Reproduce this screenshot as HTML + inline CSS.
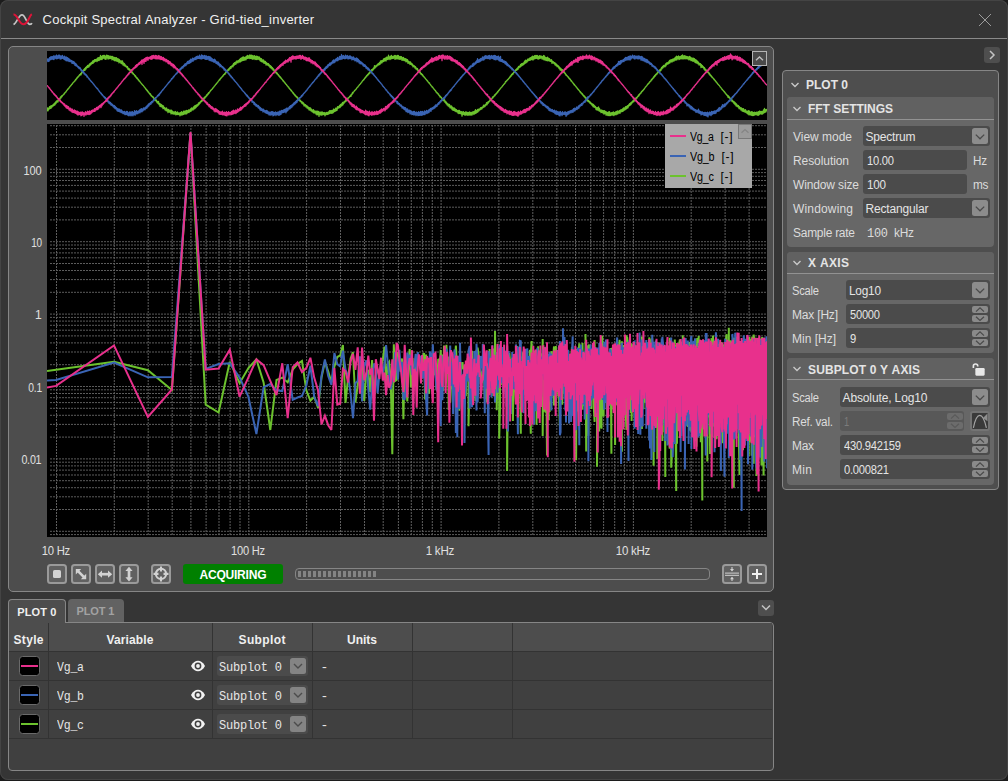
<!DOCTYPE html>
<html><head><meta charset="utf-8"><title>Cockpit Spectral Analyzer</title><style>
html,body{margin:0;padding:0;background:#1c1c1c;}
body{width:1008px;height:781px;position:relative;overflow:hidden;font-family:"Liberation Sans",sans-serif;}
.b{position:absolute;}
.t{position:absolute;white-space:nowrap;line-height:1.15;font-family:"Liberation Sans",sans-serif;}
.m{font-family:"Liberation Mono",monospace;}
svg{overflow:visible;}
</style></head><body>
<div class="b" style="left:0px;top:0px;width:1007.5px;height:779.5px;background:#353535;border-radius:8px;box-shadow:inset 0 0 0 1px #444;"></div>
<svg class="b" style="left:12px;top:12px;" width="22" height="16" viewBox="0 0 22 16"><path d="M1.5 12.6 C5 11 6.5 2.8 10 2.8 C13.5 2.8 14.5 12.3 18 12.3 C19.2 12.3 19.6 12 19.8 11" stroke="#c4c4c4" stroke-width="1.7" fill="none"/><path d="M1.5 2.6 C5.5 2.2 7 12.2 11.5 12.2 C16 12.2 17 4 19.8 2.2" stroke="#dc1438" stroke-width="2" fill="none"/></svg>
<span class="t" style="top:12.72px;font-size:13px;color:#f0f0f0;letter-spacing:0.237px;left:42.6px;">Cockpit&nbsp;Spectral&nbsp;Analyzer&nbsp;-&nbsp;Grid-tied_inverter</span>
<svg class="b" style="left:978px;top:13px;" width="14" height="14" viewBox="0 0 14 14"><path d="M1 1L13 13M13 1L1 13" stroke="#9c9c9c" stroke-width="1" fill="none"/></svg>
<div class="b" style="left:1px;top:38px;width:1006px;height:1px;background:#8a8a8a;"></div>
<div class="b" style="left:8px;top:46px;width:766px;height:546px;background:#4d4d4d;border:1px solid #868686;border-radius:5px;box-sizing:border-box;"></div>
<div class="b" style="left:47px;top:51px;width:720px;height:69px;background:#000;"></div>
<div class="b" style="left:47px;top:124px;width:720px;height:413px;background:#000;"></div>
<svg class="b" style="left:0px;top:0px;" width="1008" height="781" viewBox="0 0 1008 781"><defs><clipPath id="c1"><rect x="47" y="51" width="720" height="69"/></clipPath><clipPath id="c2"><rect x="47" y="124" width="720" height="413"/></clipPath></defs><g clip-path="url(#c1)"><path d="M47,111.3 47.5,107.9 48,110.8 48.5,108.1 49,109.5 49.5,106.6 50,108.4 50.5,106.0 51,108.5 51.5,105.6 52,107.1 52.5,105.1 53,106.2 53.5,104.1 54,105.5 54.5,103.1 55,104.9 55.5,102.0 56,103.6 56.5,100.9 57,102.2 57.5,100.6 58,102.0 58.5,99.7 59,99.9 59.5,98.3 60,99.1 60.5,97.0 61,98.0 61.5,95.8 62,96.8 62.5,95.3 63,95.3 63.5,94.2 64,94.5 64.5,93.0 65,93.1 65.5,91.9 66,92.0 66.5,90.7 67,90.6 67.5,89.2 68,89.4 68.5,88.1 69,88.2 69.5,86.9 70,86.8 70.5,85.7 71,85.7 71.5,84.4 72,84.4 72.5,83.2 73,83.1 73.5,82.0 74,82.0 74.5,80.9 75,81.0 75.5,79.5 76,79.9 76.5,78.2 77,78.6 77.5,77.0 78,77.4 78.5,76.0 79,76.2 79.5,74.7 80,75.1 80.5,73.7 81,74.9 81.5,72.4 82,73.1 82.5,71.2 83,72.2 83.5,69.9 84,70.7 84.5,68.6 85,70.3 85.5,67.5 86,69.1 86.5,66.7 87,67.8 87.5,65.4 88,67.3 88.5,65.2 89,66.8 89.5,63.8 90,65.6 90.5,63.2 91,64.7 91.5,62.5 92,63.6 92.5,61.0 93,63.4 93.5,60.6 94,62.5 94.5,59.7 95,61.5 95.5,59.5 96,61.0 96.5,59.2 97,61.7 97.5,58.0 98,60.5 98.5,57.6 99,60.7 99.5,57.4 100,59.9 100.5,55.4 101,59.3 101.5,56.5 102,59.6 102.5,55.6 103,58.5 103.5,55.3 104,58.1 104.5,55.4 105,59.1 105.5,56.2 106,59.4 106.5,55.2 107,57.9 107.5,55.4 108,59.0 108.5,55.7 109,59.0 109.5,56.2 110,58.4 110.5,56.2 111,58.5 111.5,56.4 112,59.9 112.5,56.4 113,59.3 113.5,57.1 114,60.4 114.5,57.3 115,60.8 115.5,57.6 116,60.6 116.5,57.6 117,61.4 117.5,58.6 118,61.5 118.5,58.8 119,62.8 119.5,59.5 120,62.2 120.5,60.8 121,63.4 121.5,60.9 122,63.8 122.5,60.9 123,65.0 123.5,62.8 124,65.7 124.5,63.5 125,66.2 125.5,65.0 126,66.9 126.5,66.2 127,67.8 127.5,66.5 128,69.3 128.5,68.2 129,70.0 129.5,68.9 130,71.0 130.5,69.9 131,71.8 131.5,70.8 132,73.0 132.5,72.2 133,74.1 133.5,73.6 134,74.9 134.5,74.7 135,76.4 135.5,75.7 136,77.5 136.5,77.2 137,78.7 137.5,78.1 138,79.8 138.5,79.5 139,81.0 139.5,80.9 140,81.9 140.5,82.2 141,83.2 141.5,83.3 142,84.5 142.5,84.5 143,85.5 143.5,85.7 144,86.8 144.5,86.9 145,88.0 145.5,88.0 146,89.6 146.5,89.3 147,90.8 147.5,90.5 148,92.0 148.5,91.8 149,93.2 149.5,93.1 150,94.5 150.5,93.8 151,95.8 151.5,95.4 152,96.7 152.5,96.3 153,97.7 153.5,97.2 154,99.3 154.5,98.5 155,100.5 155.5,99.1 156,101.1 156.5,100.1 157,102.7 157.5,101.6 158,103.5 158.5,101.4 159,104.6 159.5,103.5 160,106.4 160.5,103.9 161,106.7 161.5,104.5 162,107.1 162.5,105.4 163,108.6 163.5,105.9 164,108.6 164.5,107.6 165,109.9 165.5,108.1 166,110.6 166.5,107.8 167,111.0 167.5,109.3 168,112.6 168.5,109.3 169,111.8 169.5,110.1 170,112.4 170.5,110.2 171,113.8 171.5,110.1 172,113.6 172.5,111.1 173,113.8 173.5,111.8 174,114.2 174.5,111.8 175,114.1 175.5,111.5 176,115.0 176.5,112.4 177,114.4 177.5,111.8 178,114.6 178.5,112.8 179,114.6 179.5,112.8 180,115.8 180.5,112.5 181,114.8 181.5,111.6 182,115.1 182.5,112.4 183,114.6 183.5,111.1 184,114.3 184.5,111.2 185,113.6 185.5,110.8 186,114.2 186.5,110.4 187,113.6 187.5,110.6 188,112.3 188.5,109.9 189,112.7 189.5,109.9 190,111.5 190.5,108.9 191,111.5 191.5,107.9 192,110.0 192.5,108.1 193,110.1 193.5,106.9 194,109.2 194.5,105.8 195,108.6 195.5,105.3 196,107.6 196.5,104.9 197,106.5 197.5,104.3 198,105.7 198.5,102.9 199,104.7 199.5,102.3 200,103.4 200.5,101.4 201,102.1 201.5,100.1 202,101.4 202.5,99.4 203,100.3 203.5,98.2 204,99.4 204.5,97.1 205,98.2 205.5,96.3 206,96.8 206.5,95.0 207,95.8 207.5,94.0 208,94.5 208.5,92.7 209,93.3 209.5,91.9 210,91.8 210.5,90.4 211,90.5 211.5,89.5 212,89.4 212.5,88.2 213,88.2 213.5,87.1 214,87.0 214.5,85.8 215,85.7 215.5,84.6 216,84.4 216.5,83.4 217,83.2 217.5,82.1 218,82.1 218.5,80.8 219,80.7 219.5,79.3 220,79.8 220.5,78.1 221,78.4 221.5,77.1 222,77.2 222.5,76.0 223,76.2 223.5,74.6 224,74.9 224.5,73.6 225,74.3 225.5,72.3 226,72.8 226.5,71.0 227,71.8 227.5,70.0 228,70.8 228.5,68.9 229,70.1 229.5,67.8 230,68.9 230.5,66.6 231,68.4 231.5,66.1 232,66.9 232.5,65.2 233,66.9 233.5,63.5 234,65.3 234.5,62.6 235,64.5 235.5,62.2 236,64.1 236.5,61.0 237,62.9 237.5,60.9 238,62.9 238.5,60.5 239,61.8 239.5,59.4 240,62.1 240.5,58.4 241,61.5 241.5,57.8 242,60.9 242.5,57.2 243,60.4 243.5,56.9 244,60.3 244.5,57.3 245,59.9 245.5,57.0 246,59.8 246.5,56.1 247,58.7 247.5,55.3 248,58.3 248.5,55.8 249,58.1 249.5,55.0 250,58.7 250.5,55.2 251,58.3 251.5,55.2 252,58.9 252.5,55.5 253,59.4 253.5,55.9 254,58.7 254.5,55.7 255,59.5 255.5,56.4 256,59.5 256.5,56.2 257,59.6 257.5,56.4 258,59.2 258.5,56.9 259,59.5 259.5,57.0 260,60.6 260.5,58.3 261,61.4 261.5,58.7 262,61.9 262.5,59.8 263,62.2 263.5,59.9 264,63.3 264.5,61.2 265,63.3 265.5,61.3 266,65.0 266.5,62.7 267,64.9 267.5,63.4 268,65.3 268.5,63.6 269,66.1 269.5,64.9 270,67.5 270.5,65.6 271,68.2 271.5,66.5 272,69.0 272.5,67.7 273,70.2 273.5,68.8 274,71.0 274.5,70.1 275,72.0 275.5,71.2 276,73.1 276.5,72.3 277,74.0 277.5,73.3 278,75.1 278.5,74.7 279,76.4 279.5,75.9 280,77.5 280.5,76.9 281,78.5 281.5,78.2 282,79.5 282.5,79.5 283,81.0 283.5,80.7 284,82.1 284.5,82.0 285,83.3 285.5,83.2 286,84.4 286.5,84.6 287,85.6 287.5,85.8 288,86.9 288.5,86.8 289,88.3 289.5,88.2 290,89.4 290.5,89.3 291,90.8 291.5,90.4 292,91.9 292.5,91.8 293,93.3 293.5,92.9 294,94.5 294.5,94.2 295,95.8 295.5,95.2 296,96.8 296.5,96.4 297,97.9 297.5,97.1 298,99.3 298.5,98.4 299,100.4 299.5,99.4 300,101.3 300.5,100.3 301,102.2 301.5,101.5 302,103.6 302.5,102.0 303,104.1 303.5,102.9 304,105.8 304.5,104.1 305,106.0 305.5,104.6 306,107.0 306.5,105.5 307,108.0 307.5,106.2 308,108.7 308.5,107.1 309,109.8 309.5,107.6 310,110.1 310.5,107.8 311,110.9 311.5,109.2 312,111.5 312.5,110.0 313,112.3 313.5,109.6 314,113.2 314.5,110.8 315,112.9 315.5,111.1 316,114.2 316.5,111.2 317,114.8 317.5,111.2 318,114.6 318.5,111.3 319,116.4 319.5,112.1 320,114.6 320.5,112.1 321,115.1 321.5,112.0 322,115.1 322.5,112.0 323,114.6 323.5,112.7 324,114.7 324.5,112.5 325,115.8 325.5,112.8 326,114.5 326.5,112.4 327,114.7 327.5,112.4 328,114.4 328.5,111.9 329,113.8 329.5,110.7 330,113.3 330.5,110.6 331,113.2 331.5,110.5 332,113.3 332.5,110.4 333,112.9 333.5,109.0 334,112.0 334.5,109.5 335,111.4 335.5,108.2 336,110.8 336.5,108.1 337,110.3 337.5,106.6 338,108.5 338.5,106.6 339,107.7 339.5,105.3 340,107.7 340.5,104.3 341,106.5 341.5,103.8 342,105.6 342.5,102.4 343,104.9 343.5,102.1 344,103.3 344.5,101.3 345,102.0 345.5,100.2 346,101.5 346.5,98.9 347,100.5 347.5,98.2 348,99.0 348.5,97.6 349,97.7 349.5,96.4 350,96.7 350.5,95.1 351,96.3 351.5,94.1 352,94.6 352.5,92.4 353,93.3 353.5,91.8 354,91.7 354.5,90.4 355,90.6 355.5,89.5 356,89.5 356.5,88.1 357,88.1 357.5,87.0 358,87.0 358.5,85.8 359,85.7 359.5,84.6 360,84.5 360.5,83.4 361,83.2 361.5,82.2 362,82.0 362.5,80.6 363,80.7 363.5,79.6 364,79.8 364.5,78.2 365,78.4 365.5,77.0 366,77.3 366.5,75.6 367,76.1 367.5,74.5 368,75.2 368.5,73.3 369,74.0 369.5,72.1 370,73.1 370.5,71.2 371,71.6 371.5,69.7 372,71.1 372.5,69.1 373,70.1 373.5,68.0 374,69.0 374.5,65.7 375,68.1 375.5,66.0 376,67.0 376.5,65.3 377,66.1 377.5,64.2 378,65.2 378.5,63.5 379,64.8 379.5,62.5 380,64.3 380.5,60.9 381,63.1 381.5,60.6 382,62.8 382.5,60.5 383,61.7 383.5,58.8 384,61.5 384.5,58.3 385,60.5 385.5,58.0 386,61.1 386.5,57.2 387,59.5 387.5,57.2 388,59.6 388.5,55.2 389,58.9 389.5,56.8 390,59.7 390.5,56.2 391,58.9 391.5,55.3 392,58.5 392.5,56.5 393,58.5 393.5,56.2 394,58.0 394.5,55.5 395,59.3 395.5,55.5 396,58.8 396.5,55.9 397,58.8 397.5,55.4 398,58.9 398.5,55.5 399,59.1 399.5,56.6 400,59.3 400.5,56.5 401,59.0 401.5,56.6 402,60.3 402.5,57.7 403,60.2 403.5,57.3 404,60.5 404.5,58.5 405,60.9 405.5,58.7 406,61.8 406.5,59.2 407,61.6 407.5,59.6 408,63.3 408.5,61.2 409,63.1 409.5,61.8 410,64.5 410.5,61.8 411,64.3 411.5,63.2 412,65.3 412.5,64.0 413,66.8 413.5,65.3 414,66.9 414.5,65.8 415,68.1 415.5,66.6 416,69.0 416.5,68.1 417,69.8 417.5,68.5 418,71.1 418.5,70.3 419,72.2 419.5,71.2 420,73.2 420.5,72.6 421,74.3 421.5,73.6 422,75.1 422.5,74.5 423,76.2 423.5,76.0 424,77.2 424.5,77.1 425,78.3 425.5,78.4 426,79.5 426.5,79.5 427,80.8 427.5,80.7 428,82.0 428.5,82.2 429,83.2 429.5,82.9 430,84.4 430.5,84.5 431,85.7 431.5,85.8 432,87.0 432.5,86.8 433,88.1 433.5,88.1 434,89.3 434.5,89.5 435,90.6 435.5,90.5 436,92.1 436.5,91.9 437,93.2 437.5,92.9 438,94.2 438.5,93.8 439,95.7 439.5,95.3 440,97.0 440.5,96.4 441,97.7 441.5,97.4 442,99.4 442.5,98.7 443,100.5 443.5,99.3 444,101.0 444.5,99.7 445,102.4 445.5,101.3 446,103.7 446.5,102.1 447,104.9 447.5,103.5 448,105.8 448.5,104.1 449,106.7 449.5,104.4 450,107.8 450.5,105.9 451,108.1 451.5,105.9 452,109.5 452.5,107.2 453,110.3 453.5,107.9 454,110.3 454.5,108.0 455,111.1 455.5,109.0 456,111.6 456.5,109.6 457,111.9 457.5,110.6 458,113.2 458.5,110.3 459,113.6 459.5,110.4 460,113.4 460.5,111.5 461,113.8 461.5,111.7 462,116.1 462.5,111.9 463,114.5 463.5,111.7 464,114.5 464.5,112.6 465,115.4 465.5,111.8 466,114.9 466.5,112.0 467,115.0 467.5,112.4 468,115.3 468.5,112.5 469,114.8 469.5,111.9 470,115.1 470.5,112.4 471,115.0 471.5,112.3 472,115.1 472.5,111.9 473,113.8 473.5,111.6 474,114.5 474.5,111.1 475,113.5 475.5,109.7 476,113.5 476.5,110.6 477,112.4 477.5,109.3 478,112.0 478.5,109.2 479,110.9 479.5,109.0 480,109.9 480.5,107.7 481,109.3 481.5,107.4 482,108.8 482.5,106.8 483,107.7 483.5,105.2 484,107.2 484.5,105.1 485,106.6 485.5,104.5 486,105.2 486.5,102.7 487,104.8 487.5,102.1 488,103.5 488.5,101.5 489,102.1 489.5,100.6 490,101.0 490.5,99.6 491,100.3 491.5,98.6 492,98.9 492.5,97.0 493,97.9 493.5,96.3 494,96.6 494.5,95.0 495,95.7 495.5,94.0 496,94.4 496.5,93.0 497,93.3 497.5,91.7 498,92.1 498.5,90.4 499,90.7 499.5,89.4 500,89.3 500.5,88.0 501,88.0 501.5,87.1 502,87.0 502.5,85.7 503,85.7 503.5,84.5 504,84.4 504.5,83.4 505,83.3 505.5,81.5 506,81.9 506.5,80.6 507,80.8 507.5,79.6 508,79.7 508.5,78.5 509,78.5 509.5,77.2 510,77.5 510.5,75.8 511,76.4 511.5,74.4 512,75.0 512.5,73.5 513,74.3 513.5,72.3 514,72.7 514.5,71.2 515,72.3 515.5,69.9 516,70.6 516.5,68.9 517,70.0 517.5,67.9 518,69.4 518.5,66.4 519,67.8 519.5,66.1 520,67.1 520.5,64.5 521,66.5 521.5,63.7 522,65.7 522.5,63.4 523,65.2 523.5,62.8 524,64.3 524.5,61.2 525,63.4 525.5,60.1 526,62.8 526.5,60.5 527,62.1 527.5,59.1 528,61.0 528.5,59.0 529,60.4 529.5,58.1 530,60.4 530.5,57.7 531,59.9 531.5,57.0 532,59.4 532.5,56.2 533,60.1 533.5,56.5 534,59.2 534.5,55.7 535,58.7 535.5,55.5 536,58.5 536.5,55.5 537,58.4 537.5,55.5 538,59.2 538.5,56.3 539,59.0 539.5,55.6 540,58.4 540.5,55.9 541,58.0 541.5,56.2 542,59.0 542.5,56.6 543,59.2 543.5,55.5 544,59.9 544.5,55.9 545,59.9 545.5,57.3 546,60.5 546.5,57.6 547,60.7 547.5,57.1 548,60.8 548.5,58.1 549,60.7 549.5,58.7 550,61.3 550.5,59.8 551,61.7 551.5,59.6 552,63.3 552.5,61.1 553,62.8 553.5,61.7 554,63.7 554.5,62.6 555,64.9 555.5,63.1 556,65.5 556.5,64.2 557,66.5 557.5,65.1 558,67.1 558.5,65.9 559,68.5 559.5,67.0 560,69.9 560.5,68.0 561,70.3 561.5,69.0 562,71.5 562.5,69.7 563,72.1 563.5,71.4 564,72.7 564.5,71.9 565,73.8 565.5,73.5 566,75.4 566.5,74.9 567,76.1 567.5,76.0 568,77.2 568.5,77.0 569,78.5 569.5,78.3 570,79.5 570.5,79.4 571,81.0 571.5,80.7 572,81.9 572.5,82.0 573,83.3 573.5,83.3 574,84.8 574.5,84.5 575,85.7 575.5,85.8 576,86.9 576.5,86.9 577,88.2 577.5,88.2 578,89.6 578.5,89.3 579,90.6 579.5,90.6 580,92.0 580.5,91.7 581,93.2 581.5,92.8 582,94.4 582.5,93.8 583,95.6 583.5,95.1 584,96.7 584.5,96.0 585,97.9 585.5,97.2 586,99.1 586.5,98.0 587,100.6 587.5,99.7 588,101.7 588.5,100.3 589,102.1 589.5,101.3 590,103.4 590.5,102.2 591,104.2 591.5,103.3 592,105.3 592.5,103.9 593,106.7 593.5,104.4 594,107.1 594.5,105.5 595,107.6 595.5,106.5 596,109.5 596.5,107.5 597,110.2 597.5,107.6 598,110.2 598.5,106.9 599,110.9 599.5,108.4 600,111.3 600.5,110.0 601,112.7 601.5,110.0 602,112.4 602.5,110.4 603,113.1 603.5,110.7 604,114.1 604.5,110.7 605,113.5 605.5,111.3 606,115.2 606.5,111.8 607,115.1 607.5,112.5 608,115.5 608.5,111.9 609,115.6 609.5,111.7 610,115.7 610.5,112.9 611,115.5 611.5,112.7 612,114.8 612.5,112.4 613,115.2 613.5,111.9 614,115.6 614.5,112.6 615,114.3 615.5,111.9 616,114.9 616.5,111.4 617,114.2 617.5,110.8 618,114.0 618.5,111.1 619,112.8 619.5,110.5 620,113.4 620.5,109.8 621,111.8 621.5,109.6 622,111.6 622.5,108.8 623,111.3 623.5,107.8 624,110.3 624.5,107.8 625,109.9 625.5,106.6 626,109.2 626.5,106.4 627,108.5 627.5,105.6 628,107.8 628.5,105.0 629,106.0 629.5,103.7 630,105.3 630.5,102.8 631,104.6 631.5,102.2 632,103.1 632.5,101.1 633,102.1 633.5,100.0 634,101.6 634.5,99.5 635,100.0 635.5,98.1 636,99.1 636.5,97.5 637,98.0 637.5,96.4 638,96.7 638.5,95.0 639,95.8 639.5,93.9 640,94.2 640.5,92.9 641,93.2 641.5,91.5 642,91.8 642.5,90.5 643,90.8 643.5,89.4 644,89.5 644.5,88.1 645,88.1 645.5,86.8 646,86.8 646.5,85.8 647,85.6 647.5,84.2 648,84.4 648.5,83.1 649,83.4 649.5,81.9 650,82.0 650.5,80.9 651,81.0 651.5,79.3 652,79.8 652.5,78.3 653,78.6 653.5,76.8 654,77.6 654.5,75.7 655,76.4 655.5,74.4 656,75.0 656.5,73.7 657,74.2 657.5,72.2 658,72.9 658.5,70.8 659,72.0 659.5,70.0 660,71.3 660.5,69.1 661,70.4 661.5,67.5 662,68.9 662.5,66.5 663,67.8 663.5,65.4 664,66.9 664.5,65.3 665,66.8 665.5,63.8 666,65.8 666.5,62.8 667,64.3 667.5,62.7 668,64.1 668.5,61.9 669,63.4 669.5,60.4 670,62.9 670.5,59.8 671,61.6 671.5,59.7 672,62.1 672.5,59.2 673,61.1 673.5,58.8 674,61.2 674.5,58.1 675,60.1 675.5,57.1 676,60.1 676.5,56.2 677,59.8 677.5,56.7 678,58.6 678.5,55.9 679,59.7 679.5,56.7 680,59.2 680.5,56.3 681,58.6 681.5,55.6 682,58.8 682.5,54.9 683,58.9 683.5,55.8 684,58.9 684.5,55.7 685,58.6 685.5,56.0 686,58.8 686.5,56.3 687,58.6 687.5,56.7 688,59.1 688.5,56.8 689,60.0 689.5,56.3 690,59.6 690.5,57.0 691,60.7 691.5,57.9 692,60.7 692.5,58.2 693,61.3 693.5,58.1 694,61.1 694.5,58.7 695,62.3 695.5,59.6 696,62.9 696.5,60.2 697,63.2 697.5,61.2 698,63.8 698.5,62.2 699,65.0 699.5,63.4 700,65.1 700.5,63.6 701,67.6 701.5,64.7 702,67.1 702.5,65.7 703,67.7 703.5,66.7 704,69.1 704.5,67.7 705,70.5 705.5,69.1 706,71.1 706.5,70.0 707,72.1 707.5,71.2 708,72.7 708.5,72.2 709,74.1 709.5,73.2 710,75.3 710.5,74.8 711,76.4 711.5,75.9 712,77.5 712.5,77.1 713,78.4 713.5,78.3 714,79.7 714.5,79.4 715,80.9 715.5,80.7 716,82.0 716.5,81.9 717,83.2 717.5,83.2 718,84.4 718.5,84.5 719,85.5 719.5,85.7 720,86.8 720.5,87.0 721,88.0 721.5,88.1 722,89.5 722.5,89.4 723,90.5 723.5,90.5 724,91.9 724.5,91.6 725,93.0 725.5,92.9 726,94.4 726.5,94.2 727,95.5 727.5,95.2 728,97.4 728.5,95.9 729,97.9 729.5,97.1 730,98.9 730.5,98.3 731,100.2 731.5,99.5 732,101.6 732.5,100.2 733,102.1 733.5,101.5 734,103.7 734.5,101.8 735,104.6 735.5,102.8 736,105.9 736.5,103.8 737,106.5 737.5,105.1 738,107.2 738.5,105.5 739,108.6 739.5,106.6 740,108.9 740.5,107.6 741,110.0 741.5,107.8 742,110.8 742.5,108.7 743,111.4 743.5,108.7 744,111.7 744.5,109.9 745,112.2 745.5,109.6 746,112.5 746.5,111.0 747,113.3 747.5,111.2 748,114.2 748.5,110.7 749,114.8 749.5,111.0 750,114.7 750.5,112.2 751,115.2 751.5,111.6 752,115.3 752.5,111.8 753,115.6 753.5,112.5 754,115.4 754.5,112.2 755,114.9 755.5,112.5 756,114.6 756.5,112.2 757,114.9 757.5,112.2 758,115.4 758.5,111.6 759,115.0 759.5,111.0 760,114.1 760.5,111.4 761,113.6 761.5,111.3 762,114.4 762.5,111.4 763,113.7 763.5,109.9 764,112.9 764.5,108.4 765,112.3 765.5,109.7 766,111.8 766.5,109.3 767,110.9" stroke="#6cc22e" stroke-width="1.25" fill="none" stroke-linejoin="round"/>
<path d="M47,61.5 47.5,58.8 48,61.7 48.5,59.0 49,61.3 49.5,57.6 50,60.0 50.5,56.9 51,59.7 51.5,56.6 52,59.0 52.5,56.7 53,59.4 53.5,55.8 54,59.6 54.5,56.0 55,58.2 55.5,56.0 56,58.6 56.5,55.0 57,58.9 57.5,55.8 58,58.4 58.5,55.2 59,58.0 59.5,55.2 60,58.9 60.5,55.8 61,59.1 61.5,56.0 62,58.4 62.5,55.3 63,58.4 63.5,56.9 64,59.3 64.5,56.2 65,59.9 65.5,57.0 66,60.7 66.5,57.0 67,60.9 67.5,57.7 68,60.9 68.5,58.3 69,61.5 69.5,59.1 70,61.7 70.5,60.0 71,61.9 71.5,60.5 72,63.4 72.5,61.0 73,63.3 73.5,61.5 74,63.9 74.5,62.2 75,65.3 75.5,63.4 76,65.9 76.5,64.1 77,66.3 77.5,65.8 78,67.7 78.5,66.5 79,68.5 79.5,67.3 80,69.1 80.5,68.0 81,70.6 81.5,69.7 82,71.6 82.5,70.5 83,72.6 83.5,71.5 84,73.8 84.5,73.1 85,74.9 85.5,74.0 86,75.5 86.5,75.0 87,77.0 87.5,76.2 88,77.9 88.5,77.8 89,79.2 89.5,78.9 90,80.4 90.5,80.3 91,81.6 91.5,81.3 92,82.5 92.5,82.6 93,83.7 93.5,83.9 94,84.9 94.5,85.0 95,86.2 95.5,86.3 96,87.6 96.5,87.6 97,88.7 97.5,88.3 98,89.9 98.5,89.9 99,91.2 99.5,91.1 100,92.5 100.5,92.5 101,93.8 101.5,93.3 102,95.1 102.5,94.6 103,96.1 103.5,95.9 104,97.4 104.5,96.7 105,98.5 105.5,97.5 106,99.5 106.5,98.6 107,101.0 107.5,99.6 108,102.2 108.5,101.0 109,103.3 109.5,101.9 110,104.1 110.5,102.3 111,105.1 111.5,103.5 112,105.5 112.5,104.3 113,106.6 113.5,105.3 114,107.6 114.5,105.5 115,108.7 115.5,106.5 116,109.0 116.5,107.6 117,110.6 117.5,108.5 118,111.4 118.5,108.8 119,111.3 119.5,109.2 120,112.0 120.5,109.8 121,112.5 121.5,109.9 122,112.8 122.5,111.1 123,113.5 123.5,111.6 124,113.9 124.5,111.3 125,114.7 125.5,112.2 126,114.5 126.5,111.4 127,114.6 127.5,111.5 128,115.3 128.5,112.8 129,115.9 129.5,111.8 130,115.2 130.5,112.0 131,115.9 131.5,111.9 132,115.2 132.5,111.6 133,115.9 133.5,112.7 134,114.5 134.5,110.6 135,115.3 135.5,111.4 136,114.0 136.5,110.6 137,113.8 137.5,111.4 138,113.7 138.5,110.8 139,112.6 139.5,109.9 140,112.9 140.5,109.1 141,111.6 141.5,108.7 142,111.9 142.5,109.0 143,110.8 143.5,107.9 144,109.9 144.5,107.9 145,109.8 145.5,107.1 146,108.6 146.5,106.1 147,108.2 147.5,105.2 148,106.8 148.5,103.9 149,105.8 149.5,103.4 150,104.7 150.5,102.5 151,104.2 151.5,101.5 152,102.9 152.5,101.1 153,102.0 153.5,99.5 154,100.7 154.5,99.2 155,99.5 155.5,97.5 156,98.2 156.5,97.0 157,97.1 157.5,95.5 158,96.1 158.5,94.5 159,95.5 159.5,93.5 160,93.9 160.5,92.3 161,92.6 161.5,91.2 162,91.1 162.5,89.9 163,90.0 163.5,88.8 164,88.9 164.5,87.6 165,87.4 165.5,86.3 166,86.3 166.5,85.2 167,85.0 167.5,83.9 168,83.8 168.5,82.5 169,82.7 169.5,81.4 170,81.6 170.5,80.3 171,80.2 171.5,78.7 172,79.1 172.5,77.8 173,78.0 173.5,76.3 174,76.8 174.5,75.4 175,75.4 175.5,74.1 176,74.3 176.5,73.1 177,73.6 177.5,71.7 178,72.2 178.5,69.6 179,71.8 179.5,69.2 180,70.5 180.5,68.3 181,69.4 181.5,67.2 182,68.3 182.5,66.5 183,68.0 183.5,65.6 184,66.7 184.5,64.2 185,65.8 185.5,63.6 186,65.6 186.5,63.0 187,64.1 187.5,61.4 188,63.5 188.5,61.2 189,63.5 189.5,60.5 190,63.0 190.5,59.2 191,62.3 191.5,59.4 192,61.0 192.5,58.1 193,61.3 193.5,58.3 194,60.0 194.5,57.8 195,59.5 195.5,57.1 196,59.6 196.5,56.5 197,58.7 197.5,56.1 198,58.5 198.5,56.4 199,58.4 199.5,55.2 200,58.6 200.5,56.3 201,58.9 201.5,54.9 202,59.0 202.5,55.4 203,58.4 203.5,55.8 204,58.3 204.5,55.3 205,59.2 205.5,55.9 206,59.4 206.5,55.9 207,59.4 207.5,56.7 208,59.0 208.5,56.3 209,60.2 209.5,56.6 210,60.5 210.5,57.0 211,60.8 211.5,58.0 212,61.2 212.5,58.9 213,61.5 213.5,59.6 214,62.4 214.5,59.2 215,62.0 215.5,60.0 216,63.4 216.5,61.6 217,63.8 217.5,61.9 218,64.6 218.5,62.2 219,65.4 219.5,63.8 220,66.8 220.5,64.3 221,66.3 221.5,65.7 222,67.5 222.5,66.6 223,68.3 223.5,67.2 224,69.9 224.5,68.4 225,70.6 225.5,69.3 226,71.6 226.5,70.4 227,72.1 227.5,71.4 228,73.3 228.5,73.0 229,74.6 229.5,74.0 230,75.8 230.5,75.3 231,77.0 231.5,76.4 232,78.1 232.5,77.7 233,78.9 233.5,79.1 234,80.3 234.5,80.2 235,81.4 235.5,81.4 236,82.5 236.5,82.6 237,83.8 237.5,83.8 238,85.0 238.5,85.0 239,86.4 239.5,86.4 240,87.6 240.5,87.5 241,88.8 241.5,88.7 242,90.2 242.5,90.1 243,91.4 243.5,91.3 244,92.3 244.5,92.3 245,93.7 245.5,93.5 246,95.0 246.5,94.6 247,96.4 247.5,95.4 248,97.3 248.5,96.9 249,98.6 249.5,98.0 250,100.0 250.5,98.7 251,100.4 251.5,99.7 252,102.1 252.5,100.9 253,102.7 253.5,101.7 254,104.3 254.5,102.4 255,105.1 255.5,103.8 256,106.2 256.5,104.3 257,106.5 257.5,105.3 258,107.7 258.5,105.5 259,108.4 259.5,106.8 260,109.9 260.5,107.5 261,110.5 261.5,108.5 262,110.7 262.5,109.1 263,112.0 263.5,109.1 264,111.7 264.5,110.3 265,112.5 265.5,110.7 266,113.1 266.5,110.3 267,113.3 267.5,110.8 268,113.8 268.5,111.8 269,114.8 269.5,112.2 270,115.0 270.5,112.1 271,115.2 271.5,111.6 272,114.5 272.5,111.7 273,115.8 273.5,112.1 274,115.4 274.5,112.5 275,114.7 275.5,111.8 276,115.6 276.5,112.5 277,114.4 277.5,112.2 278,115.0 278.5,112.0 279,115.3 279.5,111.2 280,114.9 280.5,111.2 281,114.3 281.5,110.4 282,112.9 282.5,110.5 283,112.7 283.5,109.8 284,112.3 284.5,109.4 285,111.9 285.5,109.0 286,112.8 286.5,108.1 287,111.3 287.5,108.1 288,110.3 288.5,107.8 289,108.9 289.5,106.5 290,109.0 290.5,105.7 291,107.8 291.5,105.1 292,107.1 292.5,104.3 293,105.8 293.5,103.2 294,104.9 294.5,102.3 295,104.2 295.5,101.5 296,103.2 296.5,100.4 297,102.3 297.5,99.9 298,100.7 298.5,98.7 299,100.0 299.5,97.7 300,98.2 300.5,97.0 301,97.4 301.5,95.5 302,96.4 302.5,94.6 303,95.0 303.5,93.4 304,93.6 304.5,92.5 305,92.5 305.5,91.1 306,91.4 306.5,90.1 307,90.2 307.5,88.8 308,88.8 308.5,87.5 309,87.4 309.5,86.2 310,86.4 310.5,85.0 311,84.9 311.5,83.8 312,83.9 312.5,82.5 313,82.7 313.5,81.5 314,81.5 314.5,80.2 315,80.1 315.5,79.0 316,79.1 316.5,77.6 317,78.0 317.5,76.3 318,76.6 318.5,75.0 319,75.9 319.5,73.8 320,74.7 320.5,72.9 321,73.4 321.5,71.4 322,72.4 322.5,70.1 323,71.6 323.5,69.3 324,70.6 324.5,68.3 325,70.1 325.5,67.1 326,68.5 326.5,66.5 327,68.0 327.5,65.0 328,67.0 328.5,64.7 329,65.5 329.5,63.1 330,65.7 330.5,62.9 331,64.6 331.5,62.4 332,63.6 332.5,60.8 333,62.9 333.5,59.9 334,62.9 334.5,60.1 335,62.1 335.5,59.2 336,60.9 336.5,58.6 337,60.8 337.5,57.4 338,60.7 338.5,58.1 339,59.4 339.5,56.3 340,59.7 340.5,56.5 341,59.1 341.5,54.5 342,59.2 342.5,55.9 343,58.5 343.5,55.5 344,58.3 344.5,56.3 345,58.8 345.5,55.2 346,58.3 346.5,55.9 347,58.1 347.5,55.5 348,59.0 348.5,56.3 349,58.8 349.5,55.8 350,58.3 350.5,56.0 351,58.8 351.5,56.8 352,60.0 352.5,57.2 353,59.4 353.5,56.8 354,59.9 354.5,58.1 355,60.9 355.5,58.3 356,60.7 356.5,57.9 357,61.9 357.5,58.5 358,61.7 358.5,59.3 359,62.9 359.5,60.7 360,63.6 360.5,61.5 361,63.9 361.5,62.1 362,64.1 362.5,63.0 363,65.7 363.5,63.9 364,66.4 364.5,64.7 365,66.6 365.5,65.1 366,68.1 366.5,66.7 367,68.9 367.5,67.5 368,69.9 368.5,68.2 369,70.3 369.5,69.4 370,71.2 370.5,70.6 371,72.1 371.5,71.6 372,73.6 372.5,73.0 373,74.3 373.5,73.8 374,75.5 374.5,75.3 375,76.6 375.5,76.5 376,77.9 376.5,77.6 377,79.0 377.5,79.0 378,80.4 378.5,80.2 379,81.4 379.5,81.4 380,82.6 380.5,82.6 381,83.7 381.5,83.8 382,85.0 382.5,85.2 383,86.4 383.5,86.4 384,87.5 384.5,87.6 385,88.9 385.5,88.9 386,90.2 386.5,89.8 387,91.2 387.5,91.3 388,92.7 388.5,92.4 389,93.6 389.5,93.6 390,95.0 390.5,94.3 391,96.4 391.5,95.6 392,97.3 392.5,96.5 393,98.6 393.5,97.5 394,99.8 394.5,98.7 395,101.0 395.5,100.1 396,101.7 396.5,101.2 397,103.3 397.5,101.4 398,104.1 398.5,103.0 399,104.6 399.5,103.6 400,105.8 400.5,104.7 401,106.4 401.5,105.1 402,108.0 402.5,106.5 403,108.4 403.5,106.9 404,109.4 404.5,107.3 405,110.0 405.5,107.6 406,111.5 406.5,108.9 407,111.8 407.5,108.8 408,112.6 408.5,110.2 409,112.2 409.5,110.2 410,113.8 410.5,110.5 411,113.8 411.5,111.2 412,114.7 412.5,111.8 413,114.4 413.5,111.3 414,115.1 414.5,111.4 415,114.7 415.5,112.3 416,115.7 416.5,112.0 417,114.8 417.5,112.7 418,115.6 418.5,111.7 419,115.3 419.5,112.4 420,115.4 420.5,111.4 421,115.1 421.5,111.6 422,115.4 422.5,111.4 423,114.6 423.5,112.1 424,114.6 424.5,110.8 425,114.6 425.5,111.5 426,113.1 426.5,110.4 427,113.6 427.5,110.8 428,112.8 428.5,110.0 429,112.7 429.5,109.4 430,110.9 430.5,108.3 431,111.3 431.5,108.2 432,109.7 432.5,107.6 433,109.0 433.5,107.0 434,108.7 434.5,106.2 435,107.9 435.5,104.8 436,106.9 436.5,104.9 437,106.4 437.5,103.9 438,104.8 438.5,102.7 439,104.1 439.5,101.9 440,102.9 440.5,100.7 441,101.9 441.5,100.0 442,100.7 442.5,98.9 443,99.5 443.5,97.8 444,98.6 444.5,96.8 445,98.0 445.5,95.5 446,96.3 446.5,94.6 447,95.2 447.5,93.6 448,93.9 448.5,92.3 449,92.5 449.5,91.0 450,91.4 450.5,89.8 451,90.5 451.5,88.9 452,88.8 452.5,87.5 453,87.4 453.5,86.3 454,86.4 454.5,85.2 455,85.0 455.5,83.9 456,83.8 456.5,82.7 457,82.6 457.5,81.3 458,81.4 458.5,80.1 459,80.1 459.5,79.1 460,79.3 460.5,77.5 461,78.1 461.5,76.5 462,76.9 462.5,75.1 463,75.5 463.5,74.3 464,74.5 464.5,73.1 465,73.4 465.5,71.9 466,72.3 466.5,70.6 467,71.3 467.5,69.6 468,70.4 468.5,68.2 469,69.1 469.5,66.9 470,68.5 470.5,65.9 471,67.2 471.5,65.8 472,66.4 472.5,64.0 473,66.5 473.5,63.1 474,65.4 474.5,63.1 475,64.3 475.5,62.0 476,63.7 476.5,60.8 477,62.6 477.5,58.6 478,62.4 478.5,59.8 479,62.1 479.5,59.3 480,61.6 480.5,58.5 481,60.8 481.5,58.3 482,60.0 482.5,56.9 483,60.1 483.5,57.1 484,60.0 484.5,56.1 485,58.9 485.5,55.6 486,58.4 486.5,55.9 487,58.5 487.5,56.2 488,58.7 488.5,55.6 489,58.5 489.5,55.3 490,59.3 490.5,56.1 491,58.2 491.5,55.5 492,58.5 492.5,56.0 493,58.7 493.5,55.6 494,59.5 494.5,55.4 495,59.6 495.5,55.7 496,59.9 496.5,56.3 497,59.2 497.5,56.4 498,59.6 498.5,56.0 499,60.7 499.5,57.4 500,61.1 500.5,56.4 501,61.3 501.5,59.6 502,61.5 502.5,59.5 503,62.3 503.5,60.8 504,62.7 504.5,61.0 505,63.6 505.5,61.5 506,64.4 506.5,62.2 507,65.5 507.5,63.5 508,65.8 508.5,64.7 509,66.6 509.5,65.5 510,67.5 510.5,66.6 511,68.5 511.5,67.7 512,69.8 512.5,68.3 513,70.1 513.5,69.6 514,71.3 514.5,70.8 515,72.5 515.5,71.9 516,73.3 516.5,72.7 517,74.5 517.5,73.9 518,75.7 518.5,75.2 519,76.7 519.5,76.5 520,77.9 520.5,77.7 521,79.2 521.5,79.0 522,80.1 522.5,80.2 523,81.5 523.5,81.3 524,82.7 524.5,82.7 525,83.9 525.5,83.8 526,85.0 526.5,85.1 527,86.3 527.5,86.4 528,87.4 528.5,87.5 529,88.7 529.5,88.8 530,90.1 530.5,89.8 531,91.2 531.5,91.3 532,92.6 532.5,92.1 533,93.6 533.5,93.4 534,94.8 534.5,94.5 535,96.0 535.5,95.6 536,97.3 536.5,96.7 537,98.4 537.5,98.1 538,99.5 538.5,99.0 539,100.6 539.5,100.1 540,101.9 540.5,100.9 541,103.2 541.5,101.8 542,104.0 542.5,102.5 543,105.3 543.5,103.5 544,105.5 544.5,104.5 545,106.4 545.5,105.1 546,107.3 546.5,106.0 547,108.2 547.5,106.3 548,108.9 548.5,107.2 549,110.4 549.5,108.3 550,110.9 550.5,108.9 551,111.2 551.5,109.5 552,111.5 552.5,109.5 553,112.1 553.5,110.6 554,112.6 554.5,110.2 555,113.6 555.5,111.0 556,114.1 556.5,110.9 557,114.5 557.5,111.6 558,114.3 558.5,111.8 559,115.5 559.5,111.9 560,116.0 560.5,111.5 561,114.5 561.5,112.8 562,115.6 562.5,111.6 563,114.5 563.5,112.9 564,114.4 564.5,112.0 565,114.5 565.5,111.9 566,116.3 566.5,112.5 567,115.1 567.5,111.9 568,114.4 568.5,111.5 569,113.8 569.5,111.1 570,112.9 570.5,110.7 571,112.8 571.5,110.4 572,112.2 572.5,109.9 573,112.3 573.5,108.6 574,111.1 574.5,108.2 575,111.0 575.5,108.5 576,109.5 576.5,107.0 577,109.7 577.5,107.2 578,108.7 578.5,105.8 579,108.2 579.5,105.2 580,106.7 580.5,104.6 581,105.7 581.5,103.4 582,105.4 582.5,103.1 583,103.9 583.5,101.9 584,102.6 584.5,100.8 585,102.3 585.5,100.0 586,101.0 586.5,98.6 587,99.5 587.5,96.9 588,98.7 588.5,96.7 589,97.2 589.5,95.8 590,96.0 590.5,94.4 591,95.1 591.5,93.6 592,93.8 592.5,92.4 593,92.6 593.5,91.1 594,91.5 594.5,89.9 595,89.9 595.5,88.8 596,88.8 596.5,87.4 597,87.5 597.5,86.4 598,86.2 598.5,85.2 599,85.0 599.5,83.9 600,83.8 600.5,82.6 601,82.8 601.5,81.2 602,81.3 602.5,80.1 603,80.3 603.5,79.0 604,79.1 604.5,77.8 605,77.9 605.5,76.5 606,76.9 606.5,75.3 607,75.7 607.5,74.0 608,74.5 608.5,72.6 609,73.4 609.5,71.8 610,72.6 610.5,70.6 611,71.6 611.5,69.7 612,70.2 612.5,68.2 613,69.4 613.5,67.0 614,68.3 614.5,66.5 615,68.0 615.5,65.5 616,66.4 616.5,64.7 617,66.2 617.5,63.7 618,65.2 618.5,61.3 619,64.6 619.5,61.5 620,64.3 620.5,60.6 621,63.5 621.5,60.3 622,62.1 622.5,60.1 623,61.6 623.5,59.5 624,61.7 624.5,58.4 625,60.2 625.5,57.4 626,60.5 626.5,57.5 627,59.5 627.5,57.1 628,60.2 628.5,56.5 629,59.3 629.5,56.2 630,60.2 630.5,55.9 631,59.2 631.5,56.4 632,58.0 632.5,55.2 633,57.9 633.5,56.0 634,58.7 634.5,55.6 635,59.2 635.5,56.1 636,58.1 636.5,56.2 637,58.7 637.5,56.2 638,58.8 638.5,55.8 639,58.8 639.5,56.1 640,58.7 640.5,56.6 641,60.2 641.5,56.4 642,60.1 642.5,56.8 643,60.7 643.5,58.2 644,60.8 644.5,58.4 645,61.7 645.5,59.1 646,61.8 646.5,59.4 647,62.7 647.5,59.9 648,62.7 648.5,61.3 649,63.3 649.5,62.0 650,64.5 650.5,62.9 651,64.7 651.5,63.4 652,66.2 652.5,64.8 653,66.7 653.5,65.7 654,67.2 654.5,66.4 655,68.4 655.5,67.0 656,69.1 656.5,68.3 657,70.6 657.5,69.5 658,71.4 658.5,70.7 659,72.3 659.5,72.0 660,73.8 660.5,73.1 661,74.4 661.5,73.9 662,75.7 662.5,75.2 663,76.7 663.5,76.6 664,78.1 664.5,77.8 665,79.0 665.5,78.8 666,80.2 666.5,80.0 667,81.3 667.5,81.4 668,82.6 668.5,82.6 669,83.9 669.5,84.0 670,85.1 670.5,85.1 671,86.2 671.5,86.3 672,87.5 672.5,87.6 673,88.8 673.5,88.7 674,90.1 674.5,89.8 675,91.4 675.5,90.9 676,92.6 676.5,92.4 677,93.6 677.5,93.5 678,94.9 678.5,94.8 679,96.3 679.5,95.6 680,97.4 680.5,96.8 681,98.5 681.5,98.0 682,100.0 682.5,99.2 683,100.7 683.5,99.8 684,101.6 684.5,100.6 685,102.9 685.5,101.9 686,103.6 686.5,102.9 687,105.8 687.5,103.8 688,105.5 688.5,104.3 689,106.7 689.5,104.9 690,107.9 690.5,105.8 691,109.0 691.5,106.4 692,109.2 692.5,107.3 693,109.8 693.5,108.4 694,110.5 694.5,109.1 695,111.1 695.5,109.6 696,112.3 696.5,110.1 697,112.0 697.5,110.3 698,112.7 698.5,109.2 699,113.2 699.5,110.9 700,113.5 700.5,111.3 701,114.8 701.5,111.9 702,114.6 702.5,111.9 703,114.2 703.5,112.7 704,115.5 704.5,112.4 705,115.4 705.5,112.3 706,115.7 706.5,112.7 707,116.2 707.5,112.1 708,116.9 708.5,112.8 709,114.8 709.5,112.0 710,115.0 710.5,112.3 711,115.7 711.5,111.3 712,114.7 712.5,111.7 713,113.9 713.5,111.3 714,113.4 714.5,110.8 715,113.7 715.5,110.9 716,113.2 716.5,110.3 717,111.5 717.5,109.6 718,111.2 718.5,108.2 719,111.2 719.5,107.5 720,110.0 720.5,108.0 721,109.5 721.5,106.3 722,108.1 722.5,104.6 723,107.2 723.5,105.0 724,106.9 724.5,104.0 725,106.3 725.5,104.0 726,105.0 726.5,102.9 727,103.9 727.5,102.1 728,102.8 728.5,100.9 729,101.5 729.5,99.9 730,101.1 730.5,99.2 731,100.0 731.5,97.8 732,98.4 732.5,96.5 733,97.4 733.5,95.7 734,96.1 734.5,94.4 735,94.8 735.5,93.6 736,93.7 736.5,92.5 737,92.7 737.5,91.1 738,91.3 738.5,89.8 739,90.0 739.5,88.8 740,88.8 740.5,87.6 741,87.5 741.5,86.4 742,86.3 742.5,85.1 743,85.0 743.5,83.7 744,83.9 744.5,82.7 745,82.5 745.5,81.4 746,81.4 746.5,80.1 747,80.4 747.5,79.0 748,79.2 748.5,77.7 749,77.9 749.5,76.6 750,77.0 750.5,75.3 751,75.8 751.5,74.1 752,74.7 752.5,72.7 753,73.5 753.5,71.6 754,72.2 754.5,70.5 755,71.7 755.5,69.7 756,70.4 756.5,68.6 757,69.6 757.5,67.3 758,68.5 758.5,66.2 759,68.0 759.5,65.1 760,66.6 760.5,63.7 761,66.1 761.5,63.1 762,65.4 762.5,62.6 763,64.0 763.5,61.4 764,63.5 764.5,61.2 765,63.5 765.5,60.7 766,62.9 766.5,60.0 767,61.3" stroke="#3a64b4" stroke-width="1.25" fill="none" stroke-linejoin="round"/>
<path d="M47,85.5 47.5,85.7 48,86.8 48.5,86.9 49,88.1 49.5,87.8 50,89.3 50.5,89.4 51,90.6 51.5,90.4 52,92.0 52.5,91.7 53,93.0 53.5,93.0 54,94.6 54.5,93.9 55,95.7 55.5,95.1 56,96.6 56.5,96.0 57,97.8 57.5,97.5 58,99.2 58.5,98.6 59,100.4 59.5,99.2 60,101.3 60.5,100.3 61,102.4 61.5,101.7 62,103.1 62.5,102.4 63,104.0 63.5,103.4 64,105.3 64.5,103.9 65,106.4 65.5,105.2 66,107.6 66.5,105.3 67,108.3 67.5,106.2 68,108.7 68.5,106.7 69,109.9 69.5,108.1 70,110.7 70.5,108.2 71,111.2 71.5,109.0 72,112.1 72.5,109.2 73,112.5 73.5,110.5 74,112.5 74.5,109.8 75,113.2 75.5,110.6 76,113.3 76.5,111.1 77,114.3 77.5,111.1 78,115.1 78.5,111.8 79,114.5 79.5,112.4 80,114.7 80.5,112.1 81,115.8 81.5,112.1 82,115.4 82.5,111.9 83,114.5 83.5,112.6 84,116.3 84.5,112.8 85,114.6 85.5,111.7 86,115.2 86.5,112.4 87,114.2 87.5,111.2 88,114.4 88.5,111.7 89,114.5 89.5,110.9 90,114.5 90.5,111.4 91,113.7 91.5,110.5 92,112.6 92.5,110.0 93,111.7 93.5,110.0 94,111.3 94.5,108.7 95,111.4 95.5,108.7 96,110.2 96.5,107.4 97,109.6 97.5,107.2 98,109.5 98.5,106.3 99,108.2 99.5,105.5 100,106.8 100.5,104.9 101,107.6 101.5,103.9 102,105.8 102.5,103.3 103,104.5 103.5,102.5 104,103.2 104.5,101.6 105,102.2 105.5,100.6 106,101.3 106.5,99.4 107,101.1 107.5,98.1 108,99.1 108.5,97.2 109,97.9 109.5,96.3 110,96.8 110.5,95.1 111,95.8 111.5,93.8 112,94.2 112.5,92.8 113,93.0 113.5,91.7 114,92.1 114.5,90.5 115,90.5 115.5,89.4 116,89.3 116.5,88.1 117,88.2 117.5,86.9 118,86.9 118.5,85.7 119,85.6 119.5,84.4 120,84.6 120.5,83.4 121,83.3 121.5,81.9 122,81.9 122.5,80.9 123,80.7 123.5,79.4 124,79.5 124.5,78.3 125,78.6 125.5,77.2 126,77.5 126.5,75.8 127,76.2 127.5,74.6 128,75.0 128.5,73.2 129,74.1 129.5,72.3 130,72.7 130.5,71.1 131,72.3 131.5,69.7 132,70.6 132.5,69.0 133,69.9 133.5,67.9 134,68.7 134.5,67.1 135,68.1 135.5,65.6 136,67.4 136.5,64.7 137,66.6 137.5,64.4 138,65.3 138.5,63.2 139,64.5 139.5,62.3 140,64.0 140.5,61.6 141,62.8 141.5,60.2 142,64.5 142.5,59.8 143,61.9 143.5,59.4 144,63.4 144.5,58.6 145,61.3 145.5,57.9 146,61.3 146.5,57.4 147,59.6 147.5,57.2 148,60.4 148.5,57.3 149,58.8 149.5,57.1 150,58.6 150.5,56.7 151,59.4 151.5,55.8 152,59.2 152.5,55.7 153,58.5 153.5,55.3 154,58.1 154.5,55.8 155,58.5 155.5,55.4 156,59.0 156.5,55.6 157,58.8 157.5,56.1 158,58.9 158.5,55.5 159,58.9 159.5,55.8 160,59.2 160.5,56.5 161,59.6 161.5,56.7 162,59.4 162.5,57.7 163,60.2 163.5,57.4 164,60.9 164.5,58.6 165,60.9 165.5,59.2 166,61.8 166.5,59.4 167,61.9 167.5,60.3 168,63.3 168.5,60.7 169,64.0 169.5,61.6 170,63.8 170.5,62.0 171,65.3 171.5,63.4 172,66.0 172.5,63.9 173,66.8 173.5,64.4 174,67.8 174.5,65.4 175,67.8 175.5,66.9 176,69.0 176.5,68.1 177,70.0 177.5,68.7 178,70.6 178.5,70.0 179,72.0 179.5,71.3 180,73.1 180.5,72.1 181,74.1 181.5,73.4 182,75.3 182.5,74.4 183,76.5 183.5,75.8 184,77.2 184.5,77.1 185,78.6 185.5,78.2 186,79.8 186.5,79.4 187,80.9 187.5,80.6 188,82.1 188.5,82.0 189,83.3 189.5,83.2 190,84.5 190.5,84.4 191,85.6 191.5,85.7 192,86.9 192.5,87.0 193,88.3 193.5,88.0 194,89.6 194.5,89.3 195,90.8 195.5,90.4 196,92.0 196.5,91.8 197,92.9 197.5,92.8 198,94.5 198.5,93.9 199,95.6 199.5,95.0 200,96.9 200.5,96.2 201,98.1 201.5,97.5 202,99.1 202.5,98.2 203,100.3 203.5,99.5 204,101.1 204.5,100.2 205,102.1 205.5,101.1 206,103.2 206.5,102.0 207,104.4 207.5,102.8 208,105.2 208.5,104.3 209,106.6 209.5,104.5 210,107.1 210.5,105.6 211,108.3 211.5,106.6 212,108.9 212.5,107.0 213,109.5 213.5,108.2 214,111.0 214.5,108.8 215,111.8 215.5,108.5 216,111.7 216.5,109.0 217,111.8 217.5,109.9 218,112.7 218.5,110.7 219,113.9 219.5,111.5 220,114.3 220.5,111.8 221,114.4 221.5,111.8 222,114.5 222.5,111.1 223,115.2 223.5,112.5 224,114.6 224.5,112.1 225,115.4 225.5,112.4 226,115.7 226.5,111.7 227,115.9 227.5,112.7 228,114.7 228.5,111.7 229,115.1 229.5,112.4 230,114.2 230.5,112.3 231,115.0 231.5,111.4 232,114.3 232.5,110.9 233,114.2 233.5,110.1 234,113.6 234.5,110.9 235,113.2 235.5,110.0 236,113.7 236.5,110.3 237,112.3 237.5,108.9 238,112.0 238.5,109.4 239,111.1 239.5,108.4 240,110.3 240.5,107.2 241,110.2 241.5,107.5 242,109.0 242.5,106.6 243,107.9 243.5,105.9 244,106.8 244.5,104.6 245,106.3 245.5,103.8 246,105.8 246.5,103.1 247,104.3 247.5,102.6 248,103.6 248.5,101.2 249,102.7 249.5,100.6 250,101.0 250.5,99.1 251,100.3 251.5,98.6 252,99.3 252.5,97.6 253,98.0 253.5,96.2 254,96.9 254.5,95.3 255,95.8 255.5,93.8 256,94.6 256.5,92.7 257,93.1 257.5,91.5 258,92.0 258.5,90.5 259,90.7 259.5,89.5 260,89.5 260.5,88.1 261,88.1 261.5,87.0 262,86.8 262.5,85.8 263,85.8 263.5,84.5 264,84.4 264.5,83.2 265,83.1 265.5,82.1 266,82.4 266.5,80.9 267,80.9 267.5,79.4 268,79.7 268.5,78.4 269,78.4 269.5,77.0 270,77.6 270.5,75.7 271,76.3 271.5,74.6 272,75.0 272.5,73.4 273,73.7 273.5,72.3 274,73.2 274.5,71.3 275,72.1 275.5,69.8 276,70.7 276.5,68.6 277,69.8 277.5,67.5 278,68.9 278.5,66.7 279,68.5 279.5,65.5 280,67.2 280.5,64.7 281,66.5 281.5,63.9 282,65.1 282.5,63.2 283,65.3 283.5,62.2 284,63.7 284.5,61.3 285,63.3 285.5,60.2 286,62.7 286.5,60.6 287,61.7 287.5,59.7 288,62.2 288.5,58.9 289,60.9 289.5,57.5 290,60.2 290.5,57.5 291,62.2 291.5,56.6 292,59.3 292.5,55.9 293,59.1 293.5,56.2 294,58.8 294.5,56.7 295,58.7 295.5,56.5 296,59.1 296.5,56.1 297,58.5 297.5,56.0 298,58.4 298.5,55.9 299,58.4 299.5,55.3 300,58.1 300.5,55.4 301,59.3 301.5,56.4 302,58.3 302.5,55.4 303,58.3 303.5,56.5 304,59.7 304.5,57.1 305,59.1 305.5,57.1 306,60.3 306.5,57.7 307,60.8 307.5,58.2 308,60.7 308.5,57.8 309,61.1 309.5,57.8 310,61.5 310.5,59.6 311,62.8 311.5,60.1 312,62.9 312.5,60.6 313,63.9 313.5,61.7 314,63.7 314.5,61.8 315,64.8 315.5,62.1 316,65.7 316.5,63.7 317,66.7 317.5,64.7 318,66.8 318.5,65.5 319,67.7 319.5,66.5 320,68.6 320.5,67.6 321,70.1 321.5,69.3 322,71.1 322.5,69.9 323,71.7 323.5,70.9 324,73.0 324.5,72.3 325,74.3 325.5,73.3 326,74.9 326.5,74.4 327,76.1 327.5,75.7 328,77.5 328.5,76.9 329,78.5 329.5,78.2 330,79.7 330.5,79.5 331,80.9 331.5,80.7 332,81.9 332.5,81.9 333,83.3 333.5,83.3 334,84.4 334.5,84.4 335,85.7 335.5,85.7 336,86.9 336.5,86.9 337,88.1 337.5,88.1 338,89.5 338.5,89.5 339,90.7 339.5,90.5 340,92.1 340.5,91.8 341,93.1 341.5,92.7 342,94.2 342.5,93.8 343,95.5 343.5,95.2 344,97.1 344.5,96.3 345,97.8 345.5,97.5 346,99.8 346.5,98.2 347,100.1 347.5,99.4 348,101.2 348.5,100.1 349,102.3 349.5,101.2 350,103.8 350.5,102.5 351,104.9 351.5,103.2 352,106.4 352.5,104.2 353,106.6 353.5,104.6 354,107.4 354.5,105.2 355,108.1 355.5,106.9 356,109.4 356.5,106.1 357,109.9 357.5,107.6 358,109.9 358.5,108.6 359,110.6 359.5,108.8 360,112.2 360.5,109.3 361,112.8 361.5,110.2 362,112.3 362.5,110.5 363,112.9 363.5,111.1 364,113.4 364.5,111.6 365,114.4 365.5,110.2 366,114.9 366.5,111.0 367,114.3 367.5,111.3 368,115.3 368.5,112.0 369,115.8 369.5,111.1 370,114.5 370.5,112.8 371,114.9 371.5,111.9 372,115.3 372.5,111.9 373,114.4 373.5,112.4 374,115.0 374.5,111.7 375,114.6 375.5,112.1 376,114.2 376.5,111.1 377,114.5 377.5,111.5 378,114.4 378.5,111.4 379,113.0 379.5,110.5 380,113.3 380.5,109.9 381,112.6 381.5,108.9 382,111.6 382.5,109.3 383,111.0 383.5,108.3 384,110.0 384.5,108.3 385,111.0 385.5,106.5 386,109.5 386.5,106.5 387,108.8 387.5,105.3 388,107.8 388.5,104.4 389,106.9 389.5,103.8 390,105.1 390.5,103.2 391,104.0 391.5,102.3 392,103.5 392.5,101.1 393,102.3 393.5,100.2 394,102.1 394.5,99.3 395,100.3 395.5,98.4 396,99.2 396.5,97.3 397,98.2 397.5,96.4 398,97.0 398.5,95.0 399,95.3 399.5,93.9 400,94.3 400.5,92.9 401,93.2 401.5,91.6 402,91.9 402.5,90.5 403,90.6 403.5,89.5 404,89.5 404.5,88.0 405,88.0 405.5,86.8 406,86.9 406.5,85.7 407,85.6 407.5,84.5 408,84.4 408.5,83.2 409,83.2 409.5,82.1 410,82.3 410.5,80.9 411,81.0 411.5,79.5 412,79.9 412.5,78.4 413,78.6 413.5,77.2 414,77.2 414.5,75.8 415,76.2 415.5,74.6 416,75.1 416.5,73.6 417,74.2 417.5,72.4 418,72.8 418.5,70.9 419,72.1 419.5,69.8 420,71.3 420.5,68.6 421,69.7 421.5,67.5 422,69.0 422.5,66.8 423,67.9 423.5,65.9 424,67.3 424.5,65.3 425,66.6 425.5,64.1 426,65.8 426.5,62.8 427,64.9 427.5,62.7 428,64.1 428.5,61.6 429,63.6 429.5,60.4 430,62.7 430.5,59.7 431,61.7 431.5,57.8 432,62.2 432.5,58.2 433,61.5 433.5,58.3 434,61.2 434.5,57.6 435,59.8 435.5,57.2 436,60.3 436.5,56.6 437,60.0 437.5,57.1 438,59.9 438.5,55.6 439,59.0 439.5,55.3 440,58.3 440.5,56.0 441,58.2 441.5,55.4 442,60.7 442.5,55.0 443,58.0 443.5,55.2 444,58.7 444.5,56.1 445,59.3 445.5,55.8 446,58.1 446.5,56.1 447,59.3 447.5,55.7 448,58.8 448.5,56.3 449,58.9 449.5,56.2 450,59.1 450.5,56.6 451,60.3 451.5,57.3 452,60.8 452.5,58.2 453,61.0 453.5,59.1 454,61.3 454.5,59.8 455,61.9 455.5,59.8 456,62.8 456.5,60.6 457,63.4 457.5,60.9 458,64.5 458.5,62.5 459,64.9 459.5,62.6 460,65.3 460.5,63.7 461,66.5 461.5,64.7 462,67.3 462.5,65.6 463,68.0 463.5,66.4 464,69.1 464.5,68.0 465,70.1 465.5,68.8 466,71.3 466.5,69.9 467,72.0 467.5,71.2 468,72.9 468.5,72.4 469,74.1 469.5,73.2 470,75.2 470.5,74.8 471,76.0 471.5,75.6 472,77.3 472.5,76.9 473,78.7 473.5,78.1 474,80.0 474.5,79.3 475,80.8 475.5,80.6 476,82.1 476.5,82.1 477,83.3 477.5,83.2 478,84.6 478.5,84.6 479,85.7 479.5,85.8 480,86.9 480.5,86.8 481,88.3 481.5,88.2 482,89.5 482.5,89.2 483,90.5 483.5,90.5 484,91.8 484.5,91.6 485,93.3 485.5,93.0 486,94.6 486.5,94.0 487,95.5 487.5,94.3 488,96.7 488.5,96.4 489,97.9 489.5,97.0 490,99.4 490.5,98.4 491,100.2 491.5,99.3 492,101.6 492.5,100.7 493,102.7 493.5,100.9 494,103.4 494.5,101.7 495,104.9 495.5,103.2 496,105.3 496.5,103.7 497,106.4 497.5,104.7 498,107.1 498.5,105.4 499,108.0 499.5,106.1 500,109.0 500.5,106.6 501,109.8 501.5,107.3 502,110.4 502.5,108.2 503,110.9 503.5,108.8 504,112.0 504.5,109.9 505,112.4 505.5,109.4 506,112.5 506.5,110.4 507,113.8 507.5,110.9 508,113.1 508.5,111.1 509,114.1 509.5,110.8 510,114.7 510.5,111.3 511,114.5 511.5,111.3 512,115.4 512.5,112.7 513,115.3 513.5,111.6 514,115.4 514.5,111.5 515,114.8 515.5,112.1 516,115.2 516.5,112.5 517,115.5 517.5,112.2 518,116.3 518.5,111.5 519,115.1 519.5,112.3 520,113.8 520.5,111.0 521,114.4 521.5,111.7 522,113.3 522.5,110.8 523,112.9 523.5,109.8 524,112.5 524.5,109.4 525,112.7 525.5,109.4 526,112.0 526.5,108.7 527,110.9 527.5,108.4 528,110.0 528.5,108.3 529,110.3 529.5,106.7 530,109.3 530.5,106.8 531,108.3 531.5,105.4 532,107.2 532.5,105.0 533,106.6 533.5,104.5 534,105.4 534.5,103.4 535,104.4 535.5,102.2 536,103.4 536.5,101.0 537,102.7 537.5,100.1 538,101.6 538.5,99.4 539,100.1 539.5,97.5 540,98.9 540.5,97.2 541,98.0 541.5,96.4 542,96.6 542.5,95.0 543,95.8 543.5,94.1 544,94.4 544.5,92.8 545,93.2 545.5,91.7 546,92.0 546.5,90.5 547,90.8 547.5,89.3 548,89.5 548.5,88.3 549,88.2 549.5,86.9 550,86.8 550.5,85.8 551,85.8 551.5,84.6 552,84.5 552.5,83.3 553,83.3 553.5,81.9 554,82.1 554.5,80.7 555,80.9 555.5,79.5 556,79.5 556.5,78.4 557,78.6 557.5,77.2 558,77.6 558.5,76.0 559,76.3 559.5,74.6 560,75.2 560.5,73.3 561,73.9 561.5,72.1 562,73.2 562.5,71.1 563,72.0 563.5,70.1 564,71.3 564.5,69.0 565,69.8 565.5,67.8 566,69.4 566.5,66.4 567,68.2 567.5,65.9 568,67.5 568.5,64.8 569,66.7 569.5,63.6 570,65.8 570.5,62.6 571,65.0 571.5,61.7 572,65.2 572.5,61.8 573,63.5 573.5,60.4 574,62.7 574.5,60.4 575,62.0 575.5,59.0 576,61.8 576.5,59.4 577,61.6 577.5,57.5 578,62.4 578.5,57.3 579,60.5 579.5,57.1 580,60.0 580.5,56.5 581,59.2 581.5,56.9 582,59.5 582.5,56.0 583,59.7 583.5,56.1 584,58.7 584.5,56.4 585,58.0 585.5,56.2 586,58.7 586.5,54.9 587,58.0 587.5,56.1 588,58.9 588.5,56.0 589,58.0 589.5,55.2 590,58.3 590.5,56.1 591,59.4 591.5,55.8 592,59.9 592.5,56.3 593,59.0 593.5,57.4 594,60.0 594.5,57.2 595,59.8 595.5,58.1 596,61.2 596.5,58.4 597,60.9 597.5,58.9 598,61.9 598.5,59.4 599,62.6 599.5,60.0 600,62.5 600.5,60.2 601,63.6 601.5,61.0 602,63.8 602.5,61.7 603,65.0 603.5,63.2 604,65.3 604.5,64.3 605,65.9 605.5,65.2 606,67.0 606.5,65.8 607,68.0 607.5,67.2 608,68.7 608.5,68.2 609,69.9 609.5,69.1 610,71.0 610.5,70.2 611,72.2 611.5,70.8 612,73.1 612.5,72.5 613,73.9 613.5,73.4 614,75.4 614.5,74.4 615,76.4 615.5,75.6 616,77.2 616.5,77.0 617,78.5 617.5,78.4 618,80.0 618.5,79.5 619,81.0 619.5,80.9 620,82.0 620.5,82.1 621,83.2 621.5,83.3 622,84.4 622.5,84.4 623,85.6 623.5,85.7 624,86.8 624.5,87.0 625,88.1 625.5,88.1 626,89.4 626.5,89.4 627,90.7 627.5,90.7 628,92.1 628.5,91.7 629,93.1 629.5,92.6 630,94.2 630.5,94.2 631,95.6 631.5,94.6 632,96.7 632.5,96.4 633,98.1 633.5,97.2 634,99.0 634.5,98.3 635,100.5 635.5,98.8 636,101.3 636.5,100.3 637,102.4 637.5,101.6 638,103.8 638.5,102.6 639,104.7 639.5,103.2 640,105.7 640.5,104.0 641,107.6 641.5,104.9 642,107.0 642.5,105.3 643,108.5 643.5,106.4 644,109.5 644.5,106.8 645,110.3 645.5,108.1 646,111.0 646.5,108.0 647,111.7 647.5,109.1 648,111.9 648.5,109.0 649,113.7 649.5,110.3 650,112.6 650.5,109.8 651,113.6 651.5,111.4 652,113.5 652.5,111.1 653,113.7 653.5,111.5 654,114.7 654.5,112.3 655,114.4 655.5,111.3 656,114.8 656.5,112.6 657,115.5 657.5,111.9 658,115.1 658.5,111.7 659,114.8 659.5,112.9 660,115.6 660.5,112.0 661,114.8 661.5,111.9 662,114.3 662.5,112.2 663,114.8 663.5,111.2 664,114.2 664.5,112.1 665,113.6 665.5,111.4 666,114.0 666.5,110.5 667,113.6 667.5,109.9 668,113.1 668.5,109.7 669,112.5 669.5,109.3 670,112.1 670.5,107.0 671,110.8 671.5,108.2 672,110.0 672.5,108.1 673,110.3 673.5,107.2 674,109.1 674.5,106.1 675,108.2 675.5,106.1 676,107.4 676.5,104.4 677,106.6 677.5,103.8 678,105.5 678.5,103.3 679,104.7 679.5,102.3 680,103.3 680.5,101.3 681,102.8 681.5,100.2 682,101.5 682.5,99.6 683,100.5 683.5,98.4 684,99.2 684.5,97.3 685,98.1 685.5,96.5 686,96.6 686.5,94.9 687,95.4 687.5,93.9 688,94.2 688.5,93.1 689,93.2 689.5,91.9 690,92.0 690.5,90.6 691,90.6 691.5,89.3 692,89.6 692.5,88.2 693,88.1 693.5,87.0 694,87.2 694.5,85.6 695,85.6 695.5,84.6 696,84.4 696.5,83.3 697,83.3 697.5,81.9 698,82.1 698.5,80.8 699,80.8 699.5,79.3 700,79.5 700.5,78.5 701,78.3 701.5,76.9 702,77.4 702.5,75.7 703,76.3 703.5,74.4 704,75.1 704.5,73.5 705,73.8 705.5,72.3 706,72.8 706.5,70.8 707,72.1 707.5,70.2 708,71.0 708.5,68.9 709,70.0 709.5,67.5 710,68.8 710.5,66.7 711,68.1 711.5,65.4 712,67.0 712.5,64.7 713,66.0 713.5,63.9 714,66.1 714.5,62.8 715,64.3 715.5,61.7 716,64.1 716.5,61.3 717,65.1 717.5,60.6 718,62.4 718.5,60.1 719,62.5 719.5,59.5 720,61.2 720.5,58.9 721,60.5 721.5,58.7 722,60.1 722.5,57.6 723,60.7 723.5,57.7 724,60.1 724.5,56.7 725,59.9 725.5,57.0 726,59.4 726.5,56.5 727,59.0 727.5,56.0 728,58.9 728.5,55.7 729,59.3 729.5,55.5 730,58.4 730.5,53.8 731,58.1 731.5,55.2 732,59.8 732.5,56.0 733,59.1 733.5,56.4 734,58.1 734.5,56.3 735,59.0 735.5,56.0 736,58.9 736.5,56.4 737,60.2 737.5,56.1 738,60.1 738.5,57.5 739,60.2 739.5,57.2 740,61.1 740.5,57.6 741,60.9 741.5,58.9 742,61.4 742.5,59.0 743,62.7 743.5,59.9 744,62.7 744.5,60.5 745,63.3 745.5,61.3 746,63.7 746.5,62.7 747,64.7 747.5,63.3 748,65.2 748.5,63.5 749,66.6 749.5,65.0 750,67.7 750.5,66.2 751,68.0 751.5,66.5 752,69.4 752.5,67.6 753,69.7 753.5,68.9 754,70.6 754.5,70.3 755,72.2 755.5,71.4 756,72.7 756.5,72.5 757,74.2 757.5,73.3 758,75.2 758.5,74.7 759,76.5 759.5,76.0 760,77.2 760.5,77.0 761,78.3 761.5,78.2 762,79.6 762.5,79.7 763,80.9 763.5,80.7 764,82.0 764.5,82.1 765,83.4 765.5,83.3 766,84.4 766.5,84.5 767,85.6" stroke="#e8308c" stroke-width="1.25" fill="none" stroke-linejoin="round"/></g><g clip-path="url(#c2)"><path d="M56.5 125V535M114.3 125V535M148.2 125V535M172.2 125V535M190.9 125V535M206.1 125V535M219.0 125V535M230.1 125V535M240.0 125V535M248.8 125V535M306.6 125V535M340.5 125V535M364.5 125V535M383.2 125V535M398.4 125V535M411.3 125V535M422.4 125V535M432.3 125V535M441.1 125V535M498.9 125V535M532.8 125V535M556.8 125V535M575.5 125V535M590.7 125V535M603.6 125V535M614.7 125V535M624.6 125V535M633.4 125V535M691.2 125V535M725.1 125V535M749.1 125V535M767.8 125V535" stroke="#5e5e5e" stroke-width="1" stroke-dasharray="2 1" fill="none"/>
<path d="M50 534.6H766M50 531.3H766M50 509.5H766M50 496.8H766M50 487.7H766M50 480.7H766M50 475.0H766M50 470.1H766M50 465.9H766M50 462.2H766M50 458.9H766M50 437.1H766M50 424.4H766M50 415.3H766M50 408.3H766M50 402.6H766M50 397.7H766M50 393.5H766M50 389.8H766M50 386.5H766M50 364.7H766M50 352.0H766M50 342.9H766M50 335.9H766M50 330.2H766M50 325.3H766M50 321.1H766M50 317.4H766M50 314.1H766M50 292.3H766M50 279.6H766M50 270.5H766M50 263.5H766M50 257.8H766M50 252.9H766M50 248.7H766M50 245.0H766M50 241.7H766M50 219.9H766M50 207.2H766M50 198.1H766M50 191.1H766M50 185.4H766M50 180.5H766M50 176.3H766M50 172.6H766M50 169.3H766M50 147.5H766M50 134.8H766M50 125.7H766" stroke="#5c5c5c" stroke-width="1" stroke-dasharray="2 1" fill="none"/>
<path d="M47.0,371.0 56.1,369.7 114.0,361.7 147.9,370.2 171.9,390.0 190.5,133.0 205.7,404.6 218.6,412.5 229.8,361.7 239.6,383.2 248.4,368.1 256.4,359.4 263.6,382.4 270.3,430.0 276.5,380.0 282.3,377.6 287.7,382.4 292.7,369.7 297.5,364.1 302.0,361.0 306.3,390.3 310.4,400.6 314.2,396.7 318.0,407.8 321.5,377.6 324.9,361.7 328.2,371.3 331.4,382.4 334.4,366.5 337.3,357.0 340.2,355.4 342.9,345.1 345.5,403.0 348.1,377.6 350.6,358.6 353.0,352.2 355.4,402.5 357.7,385.1 359.9,357.0 362.1,366.7 364.2,401.0 366.2,373.5 368.3,371.3 370.2,392.1 372.1,360.1 374.0,397.8 375.8,375.6 377.6,369.6 379.4,373.6 381.1,366.5 382.8,360.0 384.5,346.6 386.1,381.8 387.7,363.9 389.2,361.8 390.8,381.2 392.3,454.3 393.8,344.3 395.2,380.9 396.6,379.9 398.0,352.0 399.4,366.6 400.8,371.7 402.1,358.4 403.4,419.3 404.7,361.4 406.0,376.5 407.3,401.5 408.5,363.4 409.7,349.1 410.9,387.5 412.1,364.7 413.3,380.9 414.4,359.8 415.6,360.7 416.7,386.6 417.8,355.6 418.9,363.5 419.9,362.4 421.0,356.1 422.1,373.7 423.1,359.0 424.1,352.9 425.1,399.6 426.1,354.5 427.1,375.5 428.1,371.3 429.1,393.6 430.0,361.7 431.0,381.3 431.9,353.3 432.8,382.4 433.7,367.6 434.6,375.2 435.5,365.4 436.4,388.5 437.3,390.0 438.2,359.6 439.0,359.3 439.9,367.4 440.7,349.9 441.5,387.7 442.4,354.5 443.2,391.1 444.0,345.6 444.8,364.9 445.6,365.7 446.4,344.8 447.1,357.7 447.9,357.6 448.7,410.0 449.4,376.8 450.2,402.7 450.9,388.7 451.6,387.0 452.4,354.0 453.1,396.0 453.8,381.0 454.5,370.7 455.2,354.5 455.9,345.5 456.6,361.3 457.3,387.0 458.0,368.3 458.7,361.4 459.3,410.7 460.0,362.5 460.7,376.8 461.3,366.4 462.0,363.0 462.6,363.0 463.3,369.3 463.9,367.9 464.5,388.3 465.1,370.6 465.8,396.2 466.4,371.2 467.0,368.7 467.6,358.3 468.5,375.5 468.5,426.2 469.7,369.1 469.7,387.7 470.9,359.8 470.9,375.7 472.0,376.2 472.0,350.8 473.2,375.5 473.2,377.9 474.3,377.9 474.3,371.2 475.4,401.1 475.4,368.3 476.5,349.9 476.5,367.6 477.6,359.7 477.6,347.6 478.6,354.9 478.6,359.7 479.7,356.4 479.7,356.1 480.7,383.9 480.7,371.2 481.8,378.2 481.8,383.3 482.8,367.2 482.8,379.7 483.8,365.2 483.8,366.7 484.8,399.2 484.8,373.0 485.7,375.7 485.8,361.4 486.7,402.0 486.7,391.1 487.7,369.8 487.7,374.9 488.6,363.2 488.6,378.8 489.6,388.4 489.6,349.0 490.5,384.6 490.5,393.5 491.4,382.1 491.4,378.4 492.3,386.1 492.3,368.7 493.2,348.6 493.2,396.1 494.1,374.4 494.1,363.0 495.0,352.5 495.0,330.9 495.8,393.9 495.8,368.7 496.7,352.7 496.7,410.3 497.5,366.5 497.5,390.6 498.4,358.6 498.4,348.5 499.2,368.6 499.2,438.6 500.0,407.2 500.0,374.3 500.9,354.7 500.9,385.2 501.7,363.0 501.7,374.9 502.5,383.1 502.5,361.5 503.3,380.3 503.3,376.6 504.0,358.7 504.1,370.6 504.8,357.9 504.8,369.6 505.6,392.0 505.6,373.0 506.4,353.2 506.4,367.5 507.1,345.6 507.1,471.0 507.9,378.4 507.9,358.6 508.6,362.3 508.6,367.6 509.3,363.2 509.4,353.0 510.1,362.4 510.1,368.2 510.8,367.6 510.8,363.1 511.5,379.3 511.5,363.0 512.2,365.3 512.2,357.8 512.9,371.2 512.9,421.1 513.8,368.7 513.8,354.1 514.9,364.1 514.9,377.5 515.9,404.1 515.9,353.6 516.9,345.9 516.9,394.8 517.9,397.6 517.9,351.9 518.9,382.7 518.9,363.4 519.9,391.9 519.9,363.4 520.8,433.7 520.8,356.6 521.8,373.4 521.8,367.6 522.7,352.3 522.7,387.1 523.7,391.2 523.7,365.3 524.6,351.3 524.6,395.0 525.5,352.0 525.5,388.1 526.4,374.4 526.4,360.0 527.3,372.6 527.3,363.0 528.2,377.6 528.2,363.7 529.0,361.8 529.1,378.6 529.9,349.8 529.9,389.3 530.8,433.8 530.8,354.4 531.6,341.0 531.6,385.2 532.4,388.3 532.5,365.9 533.3,387.3 533.3,352.9 534.1,372.0 534.1,356.7 534.9,350.7 534.9,370.4 535.7,367.6 535.7,389.0 536.5,349.5 536.5,424.8 537.3,363.2 537.3,394.8 538.1,394.4 538.1,346.3 538.9,369.4 538.9,376.0 539.6,355.6 539.7,407.2 540.4,387.1 540.4,353.5 541.2,358.2 541.2,364.4 541.9,360.2 541.9,385.7 542.7,339.1 542.7,436.1 543.4,352.7 543.4,385.6 544.1,411.8 544.1,375.2 544.8,373.8 544.9,348.1 545.6,347.9 545.6,412.7 546.3,348.5 546.3,378.8 547.0,455.4 547.0,362.6 547.8,356.8 547.8,392.8 548.7,420.2 548.7,355.3 549.6,363.8 549.6,412.0 550.5,384.6 550.5,360.3 551.4,351.2 551.4,381.1 552.3,396.5 552.3,365.8 553.2,381.0 553.2,357.0 554.0,346.4 554.0,405.5 554.9,373.9 554.9,359.0 555.7,405.9 555.8,346.0 556.6,366.5 556.6,387.7 557.4,351.2 557.4,370.1 558.2,352.5 558.2,396.5 559.0,360.8 559.1,402.3 559.9,426.1 559.9,347.8 560.6,388.8 560.7,353.5 561.4,357.7 561.5,369.2 562.2,343.5 562.2,404.7 563.0,366.1 563.0,359.8 563.8,383.1 563.8,376.6 564.5,355.4 564.5,393.4 565.3,378.3 565.3,344.1 566.0,351.9 566.0,392.5 566.8,378.0 566.8,362.6 567.5,356.4 567.5,408.8 568.2,409.6 568.2,358.0 569.0,370.7 569.0,387.5 569.7,412.7 569.7,354.0 570.4,383.1 570.4,359.8 571.1,376.0 571.1,367.1 571.9,347.3 571.9,410.8 572.7,414.7 572.7,356.9 573.6,402.4 573.6,356.5 574.4,415.2 574.5,357.6 575.3,361.2 575.3,416.1 576.1,361.4 576.1,460.2 576.9,349.1 576.9,411.4 577.7,361.6 577.8,397.0 578.5,383.2 578.6,353.0 579.3,343.2 579.4,391.8 580.1,360.8 580.1,408.2 580.9,348.2 580.9,375.7 581.7,357.7 581.7,397.5 582.5,409.7 582.5,343.1 583.2,406.3 583.2,353.2 584.0,353.7 584.0,393.6 584.7,390.0 584.7,356.8 585.5,406.7 585.5,334.0 586.2,451.5 586.2,357.6 586.9,415.0 586.9,345.4 587.7,351.7 587.7,419.7 588.4,435.9 588.4,354.8 589.1,344.4 589.1,371.5 589.8,356.0 589.8,373.6 590.5,363.9 590.6,398.9 591.4,353.0 591.4,408.9 592.2,352.7 592.2,396.8 593.0,346.4 593.0,385.7 593.8,374.3 593.8,407.5 594.6,421.9 594.6,340.1 595.4,396.7 595.4,354.4 596.2,354.5 596.2,392.0 597.0,371.4 597.0,466.7 597.7,368.5 597.7,396.3 598.5,403.4 598.5,357.6 599.2,431.6 599.3,366.3 600.0,405.0 600.0,359.6 600.7,427.8 600.7,347.7 601.5,428.7 601.5,356.2 602.2,399.7 602.2,335.7 602.9,353.9 602.9,410.9 603.6,416.4 603.6,349.8 604.3,347.8 604.3,389.9 605.1,401.9 605.1,353.6 605.9,343.2 605.9,397.4 606.7,345.6 606.7,404.9 607.5,417.9 607.5,352.8 608.3,362.5 608.3,404.8 609.1,363.9 609.1,394.2 609.9,360.8 609.9,395.3 610.6,383.0 610.6,348.1 611.4,453.7 611.4,359.9 612.1,347.7 612.2,405.5 612.9,400.4 612.9,353.0 613.6,409.6 613.6,346.6 614.4,404.0 614.4,348.9 615.1,444.9 615.1,353.6 615.8,352.6 615.8,399.1 616.5,345.7 616.5,381.7 617.2,349.8 617.2,405.4 618.0,392.2 618.0,363.4 618.8,409.0 618.8,348.8 619.6,339.8 619.6,378.1 620.4,363.7 620.4,415.5 621.1,422.7 621.1,355.8 621.9,451.7 621.9,341.3 622.7,393.1 622.7,352.6 623.4,403.4 623.4,345.0 624.2,383.8 624.2,349.3 624.9,413.7 624.9,343.5 625.6,353.0 625.6,408.7 626.4,429.9 626.4,335.3 627.1,389.3 627.1,336.8 627.8,342.5 627.8,403.5 628.5,353.4 628.5,392.6 629.2,349.1 629.3,407.8 630.0,399.2 630.0,346.9 630.8,343.1 630.8,413.1 631.6,362.3 631.6,420.9 632.3,374.6 632.3,344.6 633.1,346.0 633.1,379.8 633.8,373.5 633.8,351.6 634.6,395.7 634.6,344.3 635.3,352.6 635.3,396.4 636.0,389.8 636.0,355.8 636.8,388.6 636.8,347.2 637.5,352.2 637.5,422.0 638.2,356.3 638.2,388.6 638.9,400.7 638.9,346.6 639.6,426.1 639.6,354.7 640.4,355.5 640.4,411.8 641.1,393.2 641.2,357.6 641.9,428.9 641.9,336.4 642.7,391.8 642.7,347.5 643.4,347.5 643.4,409.1 644.1,384.1 644.1,348.2 644.9,402.6 644.9,350.2 645.6,394.6 645.6,344.1 646.3,384.7 646.3,342.6 647.0,346.2 647.0,414.5 647.7,410.7 647.7,348.2 648.4,402.8 648.4,346.7 649.2,417.4 649.2,337.6 649.9,340.0 650.0,416.7 650.7,347.9 650.7,408.0 651.4,409.4 651.4,347.8 652.2,402.7 652.2,338.3 652.9,353.9 652.9,402.3 653.6,465.8 653.6,356.4 654.3,423.0 654.3,344.7 655.0,406.3 655.0,344.6 655.8,351.9 655.8,426.7 656.5,393.8 656.5,358.7 657.3,342.2 657.3,459.0 658.0,342.4 658.0,392.8 658.8,347.3 658.8,397.8 659.5,409.4 659.5,346.1 660.2,344.0 660.2,404.3 661.0,346.6 661.0,426.5 661.7,403.0 661.7,351.4 662.4,441.1 662.4,345.9 663.1,346.4 663.1,384.0 663.9,422.7 663.9,356.9 664.6,432.2 664.6,346.7 665.3,477.1 665.4,347.5 666.1,352.1 666.1,415.7 666.8,398.9 666.8,350.2 667.5,345.7 667.5,413.4 668.2,348.7 668.3,430.5 669.0,355.8 669.0,444.5 669.7,337.8 669.7,448.8 670.4,350.3 670.4,428.8 671.2,349.0 671.2,467.8 671.9,454.0 671.9,349.8 672.6,408.6 672.7,346.4 673.4,394.0 673.4,355.0 674.1,343.2 674.1,425.1 674.8,339.4 674.8,390.8 675.5,345.1 675.5,427.3 676.2,491.1 676.2,348.6 677.0,345.2 677.0,443.7 677.7,352.8 677.7,421.7 678.4,426.2 678.4,346.5 679.2,413.5 679.2,343.6 679.9,339.5 679.9,418.8 680.6,388.5 680.6,351.0 681.3,413.5 681.3,341.7 682.0,410.3 682.0,346.8 682.8,417.6 682.8,335.3 683.5,412.3 683.5,339.9 684.2,342.8 684.2,417.1 684.9,409.0 684.9,342.6 685.7,349.3 685.7,424.9 686.4,350.5 686.4,397.1 687.1,351.1 687.1,409.3 687.8,426.9 687.8,350.5 688.6,396.9 688.6,344.8 689.3,342.0 689.3,420.9 690.0,430.8 690.0,355.3 690.7,344.4 690.7,416.1 691.4,432.1 691.4,349.9 692.2,361.2 692.2,415.6 692.9,342.8 692.9,401.6 693.6,405.7 693.6,351.3 694.3,408.8 694.4,343.6 695.1,339.5 695.1,441.3 695.8,344.2 695.8,413.5 696.5,350.8 696.5,446.7 697.2,414.1 697.2,337.9 697.9,403.6 697.9,353.9 698.7,335.9 698.7,428.4 699.4,420.5 699.4,344.3 700.1,341.9 700.1,396.2 700.8,344.4 700.8,442.3 701.5,390.7 701.5,340.5 702.3,500.6 702.3,350.1 703.0,346.2 703.0,409.3 703.7,348.0 703.7,408.5 704.4,346.9 704.4,422.3 705.1,423.1 705.1,353.4 705.8,431.0 705.8,345.8 706.6,407.5 706.6,345.6 707.3,347.5 707.3,461.6 708.0,342.9 708.0,414.2 708.7,417.2 708.7,347.4 709.4,417.1 709.4,347.6 710.1,454.0 710.1,347.6 710.9,415.6 710.9,346.3 711.6,338.2 711.6,429.3 712.3,437.0 712.3,348.4 713.0,335.6 713.0,409.0 713.7,426.6 713.7,342.5 714.5,344.2 714.5,418.1 715.2,412.4 715.2,355.1 715.9,413.2 715.9,348.6 716.6,439.3 716.6,348.5 717.3,413.1 717.3,341.3 718.0,410.3 718.1,340.2 718.8,344.1 718.8,421.7 719.5,443.9 719.5,346.6 720.2,409.1 720.2,351.0 720.9,437.3 720.9,342.0 721.6,429.0 721.6,343.0 722.3,347.9 722.4,443.3 723.1,344.2 723.1,418.7 723.8,421.1 723.8,346.4 724.5,347.5 724.5,426.0 725.2,346.0 725.2,408.0 725.9,406.2 725.9,339.6 726.6,334.2 726.6,419.4 727.3,409.1 727.3,346.0 728.1,355.3 728.1,415.0 728.8,417.3 728.8,327.7 729.5,452.1 729.5,353.7 730.2,343.1 730.2,417.8 730.9,340.3 730.9,419.2 731.6,435.0 731.6,341.2 732.3,355.0 732.4,406.9 733.1,347.9 733.1,434.7 733.8,487.7 733.8,337.8 734.5,339.6 734.5,401.8 735.2,409.1 735.2,346.5 735.9,403.0 735.9,349.7 736.6,418.1 736.6,339.4 737.3,414.3 737.3,336.7 738.0,341.9 738.1,417.3 738.7,343.9 738.8,434.5 739.5,475.0 739.5,343.9 740.2,346.1 740.2,440.6 740.9,450.2 740.9,345.0 741.6,344.8 741.6,446.8 742.3,341.1 742.3,433.3 743.0,348.1 743.0,450.3 743.7,426.6 743.7,340.2 744.4,342.9 744.4,419.1 745.1,342.4 745.2,411.8 745.9,350.8 745.9,408.1 746.6,339.2 746.6,415.5 747.3,339.9 747.3,423.7 748.0,412.6 748.0,342.7 748.7,456.0 748.7,344.4 749.4,337.0 749.4,442.4 750.1,430.3 750.1,352.4 750.8,441.4 750.8,347.2 751.5,338.9 751.6,455.8 752.3,445.4 752.3,336.6 753.0,344.5 753.0,433.9 753.7,463.8 753.7,334.6 754.4,341.2 754.4,404.4 755.1,437.3 755.1,352.7 755.8,344.7 755.8,416.5 756.5,476.0 756.5,337.7 757.2,410.6 757.2,346.2 757.9,417.8 757.9,338.9 758.6,345.1 758.6,426.4 759.4,342.7 759.4,408.9 760.1,338.6 760.1,445.8 760.8,419.8 760.8,341.5 761.5,465.5 761.5,342.6 762.2,337.0 762.2,454.8 762.9,341.3 762.9,418.3 763.6,475.5 763.6,347.4 764.3,339.0 764.3,419.5 765.0,342.7 765.0,430.7 765.7,427.5 765.8,343.0 766.5,339.4 766.5,433.3 767.1,344.5 767.1,416.2" stroke="#6cc22e" stroke-width="2" fill="none" stroke-linejoin="miter" stroke-miterlimit="3"/>
<path d="M47.0,380.5 56.1,380.0 114.0,362.5 147.9,377.3 171.9,377.0 190.5,133.0 205.7,368.9 218.6,364.1 229.8,363.3 239.6,377.6 248.4,396.7 256.4,434.0 263.6,387.1 270.3,384.0 276.5,390.3 282.3,391.1 287.7,364.1 292.7,399.8 297.5,397.5 302.0,395.9 306.3,385.6 310.4,365.7 314.2,396.7 318.0,406.2 321.5,376.0 324.9,359.4 328.2,376.0 331.4,384.8 334.4,353.0 337.3,364.1 340.2,366.5 342.9,350.6 345.5,369.7 348.1,376.0 350.6,393.5 353.0,418.1 355.4,383.3 357.7,380.9 359.9,356.4 362.1,401.4 364.2,365.9 366.2,360.4 368.3,389.3 370.2,409.7 372.1,382.4 374.0,363.5 375.8,367.6 377.6,393.1 379.4,373.5 381.1,363.0 382.8,374.0 384.5,364.5 386.1,345.2 387.7,362.4 389.2,375.6 390.8,389.3 392.3,378.0 393.8,369.8 395.2,352.1 396.6,358.3 398.0,379.7 399.4,349.7 400.8,371.7 402.1,361.9 403.4,398.8 404.7,399.2 406.0,388.0 407.3,352.5 408.5,362.5 409.7,354.6 410.9,364.1 412.1,374.8 413.3,369.6 414.4,366.2 415.6,353.8 416.7,373.2 417.8,352.0 418.9,365.4 419.9,355.6 421.0,370.4 422.1,362.0 423.1,378.4 424.1,369.3 425.1,386.8 426.1,399.8 427.1,415.4 428.1,361.6 429.1,372.4 430.0,351.6 431.0,355.3 431.9,375.9 432.8,344.3 433.7,366.3 434.6,358.7 435.5,374.8 436.4,388.5 437.3,390.8 438.2,389.9 439.0,365.8 439.9,398.0 440.7,426.0 441.5,355.4 442.4,400.1 443.2,372.6 444.0,370.9 444.8,365.1 445.6,370.2 446.4,348.6 447.1,359.4 447.9,367.1 448.7,365.2 449.4,370.0 450.2,345.6 450.9,385.9 451.6,362.1 452.4,367.9 453.1,414.1 453.8,381.0 454.5,349.4 455.2,357.8 455.9,433.0 456.6,381.0 457.3,437.2 458.0,355.7 458.7,398.3 459.3,409.0 460.0,342.7 460.7,372.9 461.3,379.7 462.0,411.6 462.6,375.7 463.3,376.9 463.9,369.3 464.5,443.0 465.1,393.4 465.8,387.3 466.4,373.1 467.0,380.6 467.6,365.4 468.5,381.7 468.5,350.8 469.7,346.0 469.7,408.5 470.9,387.4 470.9,367.5 472.0,358.5 472.0,407.3 473.2,389.5 473.2,372.3 474.3,363.0 474.3,351.2 475.4,353.5 475.4,357.4 476.5,410.4 476.5,343.8 477.6,365.3 477.6,402.4 478.6,383.8 478.6,365.1 479.7,375.9 479.7,372.8 480.7,356.9 480.7,355.9 481.8,368.3 481.8,357.5 482.8,374.8 482.8,344.1 483.8,365.7 483.8,345.2 484.8,413.3 484.8,352.6 485.7,367.7 485.8,361.1 486.7,388.8 486.7,368.2 487.7,381.5 487.7,399.1 488.6,454.9 488.6,351.0 489.6,362.9 489.6,387.7 490.5,383.6 490.5,371.9 491.4,356.2 491.4,397.3 492.3,345.2 492.3,347.9 493.2,384.6 493.2,364.2 494.1,377.3 494.1,361.8 495.0,402.3 495.0,371.7 495.8,366.4 495.8,364.8 496.7,362.0 496.7,352.0 497.5,384.8 497.5,392.8 498.4,375.6 498.4,367.3 499.2,346.1 499.2,361.2 500.0,360.0 500.0,344.4 500.9,382.9 500.9,383.5 501.7,374.0 501.7,381.1 502.5,363.8 502.5,347.1 503.3,392.7 503.3,369.5 504.0,362.6 504.1,370.6 504.8,350.5 504.8,360.0 505.6,352.6 505.6,398.1 506.4,388.5 506.4,406.8 507.1,355.6 507.1,345.8 507.9,431.6 507.9,357.6 508.6,360.4 508.6,350.9 509.3,382.7 509.4,361.0 510.1,385.1 510.1,404.5 510.8,359.7 510.8,414.0 511.5,361.7 511.5,381.8 512.2,370.9 512.2,352.0 512.9,384.7 512.9,371.8 513.8,389.0 513.8,371.5 514.9,389.8 514.9,357.1 515.9,381.9 515.9,344.4 516.9,360.2 516.9,383.1 517.9,434.3 517.9,346.6 518.9,392.7 518.9,373.5 519.9,366.1 519.9,340.9 520.8,341.2 520.8,384.5 521.8,373.3 521.8,406.9 522.7,377.3 522.7,402.1 523.7,413.1 523.7,365.0 524.6,384.6 524.6,369.2 525.5,373.9 525.5,349.0 526.4,364.0 526.4,386.6 527.3,348.3 527.3,392.2 528.2,383.7 528.2,392.1 529.0,380.4 529.1,355.9 529.9,374.2 529.9,382.9 530.8,360.2 530.8,408.7 531.6,389.9 531.6,360.0 532.4,380.8 532.5,409.3 533.3,359.2 533.3,377.0 534.1,424.6 534.1,379.4 534.9,355.2 534.9,377.9 535.7,354.7 535.7,411.2 536.5,373.2 536.5,386.3 537.3,380.6 537.3,347.8 538.1,398.5 538.1,373.0 538.9,361.2 538.9,378.1 539.6,405.7 539.7,360.6 540.4,399.0 540.4,372.1 541.2,396.7 541.2,356.4 541.9,362.2 541.9,376.2 542.7,365.8 542.7,350.3 543.4,350.1 543.4,371.2 544.1,368.3 544.1,380.1 544.8,360.7 544.9,368.0 545.6,370.9 545.6,347.0 546.3,395.5 546.3,350.2 547.0,356.3 547.0,378.2 547.8,409.5 547.8,354.5 548.7,354.7 548.7,363.4 549.6,386.2 549.6,352.1 550.5,401.4 550.5,360.3 551.4,353.4 551.4,410.5 552.3,362.7 552.3,395.6 553.2,394.0 553.2,365.1 554.0,395.6 554.0,358.0 554.9,381.9 554.9,362.0 555.7,353.1 555.8,388.0 556.6,365.2 556.6,359.5 557.4,350.0 557.4,391.6 558.2,351.7 558.2,387.8 559.0,345.4 559.1,376.4 559.9,341.0 559.9,435.2 560.6,432.2 560.7,351.0 561.4,390.9 561.5,366.7 562.2,347.3 562.2,384.5 563.0,379.3 563.0,328.3 563.8,380.3 563.8,360.0 564.5,399.3 564.5,336.9 565.3,410.5 565.3,359.6 566.0,422.5 566.0,352.6 566.8,364.9 566.8,383.6 567.5,371.5 567.5,393.3 568.2,349.7 568.2,400.9 569.0,355.6 569.0,423.5 569.7,355.0 569.7,391.0 570.4,355.7 570.4,359.6 571.1,364.1 571.1,421.9 571.9,402.5 571.9,354.5 572.7,336.4 572.7,416.0 573.6,382.1 573.6,356.7 574.4,388.1 574.5,355.2 575.3,361.4 575.3,412.9 576.1,430.1 576.1,352.0 576.9,390.3 576.9,349.8 577.7,378.7 577.8,349.0 578.5,349.6 578.6,371.5 579.3,445.2 579.4,347.9 580.1,400.7 580.1,356.5 580.9,344.6 580.9,400.6 581.7,382.3 581.7,349.6 582.5,404.6 582.5,350.7 583.2,398.0 583.2,367.1 584.0,393.7 584.0,353.6 584.7,419.4 584.7,355.0 585.5,391.9 585.5,351.7 586.2,345.3 586.2,386.4 586.9,371.0 586.9,354.4 587.7,361.9 587.7,387.9 588.4,348.7 588.4,461.3 589.1,348.4 589.1,409.1 589.8,358.8 589.8,394.1 590.5,406.6 590.6,344.4 591.4,400.5 591.4,348.4 592.2,353.7 592.2,398.3 593.0,350.3 593.0,398.4 593.8,389.9 593.8,349.3 594.6,358.3 594.6,384.2 595.4,389.3 595.4,354.2 596.2,398.1 596.2,347.5 597.0,413.1 597.0,357.8 597.7,347.6 597.7,380.5 598.5,375.4 598.5,350.9 599.2,380.2 599.3,343.1 600.0,362.6 600.0,389.0 600.7,341.4 600.7,390.7 601.5,391.9 601.5,349.0 602.2,354.7 602.2,393.6 602.9,364.6 602.9,399.9 603.6,364.7 603.6,386.8 604.3,409.6 604.3,341.8 605.1,354.2 605.1,402.7 605.9,399.5 605.9,339.4 606.7,399.8 606.7,341.5 607.5,432.0 607.5,352.9 608.3,398.6 608.3,358.5 609.1,366.0 609.1,406.1 609.9,348.4 609.9,395.2 610.6,383.5 610.6,349.6 611.4,360.1 611.4,395.2 612.1,388.6 612.2,356.6 612.9,401.5 612.9,368.7 613.6,357.7 613.6,404.2 614.4,347.9 614.4,377.7 615.1,392.9 615.1,356.9 615.8,396.7 615.8,353.0 616.5,402.1 616.5,346.4 617.2,337.4 617.2,401.5 618.0,347.7 618.0,392.2 618.8,397.4 618.8,356.0 619.6,352.9 619.6,406.1 620.4,374.4 620.4,347.0 621.1,464.1 621.1,349.5 621.9,342.8 621.9,397.5 622.7,357.5 622.7,381.1 623.4,412.1 623.4,351.4 624.2,347.1 624.2,388.8 624.9,355.7 624.9,382.8 625.6,341.7 625.6,398.3 626.4,347.3 626.4,396.1 627.1,342.0 627.1,395.2 627.8,383.1 627.8,349.6 628.5,461.1 628.5,344.4 629.2,386.9 629.3,340.3 630.0,351.3 630.0,385.9 630.8,391.6 630.8,348.1 631.6,349.7 631.6,382.4 632.3,411.8 632.3,348.4 633.1,394.4 633.1,365.7 633.8,404.3 633.8,342.4 634.6,341.7 634.6,428.7 635.3,344.8 635.3,394.8 636.0,346.7 636.0,388.4 636.8,353.0 636.8,412.4 637.5,398.6 637.5,357.6 638.2,434.1 638.2,350.0 638.9,409.5 638.9,360.4 639.6,378.1 639.6,332.5 640.4,434.8 640.4,359.7 641.1,350.0 641.2,426.6 641.9,339.6 641.9,398.4 642.7,426.4 642.7,348.4 643.4,348.8 643.4,394.0 644.1,384.7 644.1,350.2 644.9,397.3 644.9,344.4 645.6,347.2 645.6,391.9 646.3,339.9 646.3,428.7 647.0,344.0 647.0,392.4 647.7,389.7 647.7,342.6 648.4,345.6 648.4,375.0 649.2,440.6 649.2,350.7 649.9,348.6 650.0,448.6 650.7,406.2 650.7,352.8 651.4,460.0 651.4,347.1 652.2,399.1 652.2,334.8 652.9,353.9 652.9,390.3 653.6,417.8 653.6,341.7 654.3,451.9 654.3,347.3 655.0,427.1 655.0,349.0 655.8,401.4 655.8,340.6 656.5,409.2 656.5,348.2 657.3,410.0 657.3,342.8 658.0,400.7 658.0,350.2 658.8,342.7 658.8,423.3 659.5,345.6 659.5,427.1 660.2,343.4 660.2,432.3 661.0,352.9 661.0,419.7 661.7,338.5 661.7,399.0 662.4,425.5 662.4,336.8 663.1,345.1 663.1,388.0 663.9,383.4 663.9,349.9 664.6,410.3 664.6,345.6 665.3,440.9 665.4,346.3 666.1,351.0 666.1,419.4 666.8,343.0 666.8,419.0 667.5,351.6 667.5,445.5 668.2,395.3 668.3,358.3 669.0,428.2 669.0,358.0 669.7,356.5 669.7,422.7 670.4,349.3 670.4,394.9 671.2,449.5 671.2,337.6 671.9,423.3 671.9,356.8 672.6,341.4 672.7,457.1 673.4,432.0 673.4,348.9 674.1,416.5 674.1,356.2 674.8,353.7 674.8,443.9 675.5,414.6 675.5,350.3 676.2,346.8 676.2,411.8 677.0,348.6 677.0,411.8 677.7,352.1 677.7,408.3 678.4,404.0 678.4,350.1 679.2,410.5 679.2,354.9 679.9,403.2 679.9,350.3 680.6,347.6 680.6,452.0 681.3,346.1 681.3,436.1 682.0,353.9 682.0,422.6 682.8,338.8 682.8,399.7 683.5,393.3 683.5,346.5 684.2,398.6 684.2,351.2 684.9,342.4 684.9,469.6 685.7,337.9 685.7,425.9 686.4,424.2 686.4,346.4 687.1,346.3 687.1,417.6 687.8,340.5 687.8,402.4 688.6,347.2 688.6,444.1 689.3,346.0 689.3,415.7 690.0,409.5 690.0,348.4 690.7,427.1 690.7,339.8 691.4,335.9 691.4,449.0 692.2,351.7 692.2,409.7 692.9,426.2 692.9,347.8 693.6,340.9 693.6,387.3 694.3,401.9 694.4,357.4 695.1,338.2 695.1,425.4 695.8,349.2 695.8,401.7 696.5,351.6 696.5,406.3 697.2,407.3 697.2,347.6 697.9,354.1 697.9,437.5 698.7,422.6 698.7,343.0 699.4,436.2 699.4,348.5 700.1,356.0 700.1,421.0 700.8,348.3 700.8,415.2 701.5,405.8 701.5,343.2 702.3,343.6 702.3,417.5 703.0,411.7 703.0,340.5 703.7,406.6 703.7,340.2 704.4,347.5 704.4,426.8 705.1,343.5 705.1,404.5 705.8,455.4 705.8,334.0 706.6,334.0 706.6,411.6 707.3,346.4 707.3,434.5 708.0,348.2 708.0,414.9 708.7,339.1 708.7,396.1 709.4,405.7 709.4,350.3 710.1,395.7 710.1,341.7 710.9,346.9 710.9,422.7 711.6,350.2 711.6,434.3 712.3,404.1 712.3,349.7 713.0,345.7 713.0,423.0 713.7,403.3 713.7,357.5 714.5,344.3 714.5,452.3 715.2,339.5 715.2,396.9 715.9,399.5 715.9,332.2 716.6,347.9 716.6,421.3 717.3,339.1 717.3,416.2 718.0,338.7 718.1,430.8 718.8,401.4 718.8,346.9 719.5,350.4 719.5,399.6 720.2,432.3 720.2,344.5 720.9,470.9 720.9,347.1 721.6,413.7 721.6,346.9 722.3,350.9 722.4,407.3 723.1,357.5 723.1,418.1 723.8,350.8 723.8,419.3 724.5,476.8 724.5,346.5 725.2,407.6 725.2,338.7 725.9,406.2 725.9,344.1 726.6,343.4 726.6,425.4 727.3,396.5 727.3,342.6 728.1,433.7 728.1,351.3 728.8,344.9 728.8,458.0 729.5,347.2 729.5,410.5 730.2,346.6 730.2,442.7 730.9,445.6 730.9,345.5 731.6,402.9 731.6,346.3 732.3,419.1 732.4,333.9 733.1,344.2 733.1,394.7 733.8,349.1 733.8,439.4 734.5,406.3 734.5,345.1 735.2,438.7 735.2,332.7 735.9,340.3 735.9,405.2 736.6,343.3 736.6,432.7 737.3,342.5 737.3,418.3 738.0,429.1 738.1,335.6 738.7,352.0 738.8,415.8 739.5,433.5 739.5,342.8 740.2,459.9 740.2,347.3 740.9,412.3 740.9,347.0 741.6,510.9 741.6,352.2 742.3,398.5 742.3,341.4 743.0,340.3 743.0,445.2 743.7,421.5 743.7,335.4 744.4,345.2 744.4,429.6 745.1,445.5 745.2,343.4 745.9,338.7 745.9,440.9 746.6,417.6 746.6,342.5 747.3,399.1 747.3,335.1 748.0,464.3 748.0,342.9 748.7,353.2 748.7,417.5 749.4,410.2 749.4,348.7 750.1,349.0 750.1,415.2 750.8,436.5 750.8,343.0 751.5,345.1 751.6,415.9 752.3,340.1 752.3,469.7 753.0,403.7 753.0,340.6 753.7,340.2 753.7,434.8 754.4,348.4 754.4,402.7 755.1,344.3 755.1,432.5 755.8,348.1 755.8,455.6 756.5,468.5 756.5,345.4 757.2,339.7 757.2,403.6 757.9,343.4 757.9,463.5 758.6,427.0 758.6,344.9 759.4,413.7 759.4,342.0 760.1,457.8 760.1,339.4 760.8,342.8 760.8,416.7 761.5,340.2 761.5,447.1 762.2,415.5 762.2,339.6 762.9,409.3 762.9,341.0 763.6,345.4 763.6,426.6 764.3,337.5 764.3,461.6 765.0,433.8 765.0,345.7 765.7,341.1 765.8,422.3 766.5,336.2 766.5,454.2 767.1,337.4 767.1,468.2" stroke="#3a64b4" stroke-width="2" fill="none" stroke-linejoin="miter" stroke-miterlimit="3"/>
<path d="M47.0,387.5 56.1,385.9 114.0,345.4 147.9,417.0 171.9,389.5 190.5,132.0 205.7,369.7 218.6,368.6 229.8,349.8 239.6,396.7 248.4,377.3 256.4,359.4 263.6,365.2 270.3,380.8 276.5,395.1 282.3,363.3 287.7,418.1 292.7,367.3 297.5,362.5 302.0,372.1 306.3,368.1 310.4,357.8 314.2,377.6 318.0,390.3 321.5,424.4 324.9,415.7 328.2,425.2 331.4,430.0 334.4,368.1 337.3,404.6 340.2,403.8 342.9,368.9 345.5,371.3 348.1,382.4 350.6,361.7 353.0,353.8 355.4,369.8 357.7,347.3 359.9,393.8 362.1,347.5 364.2,380.1 366.2,374.0 368.3,355.7 370.2,374.7 372.1,368.1 374.0,420.8 375.8,359.3 377.6,368.6 379.4,379.0 381.1,357.7 382.8,380.6 384.5,372.5 386.1,395.1 387.7,375.0 389.2,387.9 390.8,383.3 392.3,359.4 393.8,382.1 395.2,371.0 396.6,343.0 398.0,346.0 399.4,360.6 400.8,368.5 402.1,382.3 403.4,392.0 404.7,344.9 406.0,369.6 407.3,397.5 408.5,364.9 409.7,358.2 410.9,365.4 412.1,350.2 413.3,415.0 414.4,369.1 415.6,372.2 416.7,407.7 417.8,364.2 418.9,354.4 419.9,366.3 421.0,383.4 422.1,355.1 423.1,369.9 424.1,369.8 425.1,359.3 426.1,393.4 427.1,356.1 428.1,362.4 429.1,357.7 430.0,388.9 431.0,357.0 431.9,388.9 432.8,403.3 433.7,354.2 434.6,353.9 435.5,353.0 436.4,371.6 437.3,382.5 438.2,442.3 439.0,364.0 439.9,360.8 440.7,355.3 441.5,382.0 442.4,386.9 443.2,364.3 444.0,356.8 444.8,345.7 445.6,393.1 446.4,371.2 447.1,351.8 447.9,374.0 448.7,366.4 449.4,422.7 450.2,362.8 450.9,350.1 451.6,355.7 452.4,352.4 453.1,363.4 453.8,384.5 454.5,358.6 455.2,387.2 455.9,355.5 456.6,407.6 457.3,355.8 458.0,391.6 458.7,376.4 459.3,379.8 460.0,362.0 460.7,390.1 461.3,375.3 462.0,445.4 462.6,383.3 463.3,374.1 463.9,399.0 464.5,364.5 465.1,376.2 465.8,360.5 466.4,363.6 467.0,373.6 467.6,353.5 468.5,364.6 468.5,356.6 469.7,378.3 469.7,368.4 470.9,388.5 470.9,337.6 472.0,384.7 472.0,383.7 473.2,405.1 473.2,383.6 474.3,358.8 474.3,361.8 475.4,395.7 475.4,376.4 476.5,374.1 476.5,363.2 477.6,372.4 477.6,366.5 478.6,355.1 478.6,360.5 479.7,377.0 479.7,372.7 480.7,376.8 480.7,398.4 481.8,387.9 481.8,381.8 482.8,379.9 482.8,380.0 483.8,367.0 483.8,344.6 484.8,358.3 484.8,357.5 485.7,359.0 485.8,366.1 486.7,350.2 486.7,362.1 487.7,370.3 487.7,404.2 488.6,370.9 488.6,387.1 489.6,395.2 489.6,370.1 490.5,357.8 490.5,381.1 491.4,358.6 491.4,369.2 492.3,393.3 492.3,345.6 493.2,375.1 493.2,381.1 494.1,354.7 494.1,396.3 495.0,360.2 495.0,389.3 495.8,375.5 495.8,385.5 496.7,355.0 496.7,375.7 497.5,344.1 497.5,364.9 498.4,361.9 498.4,369.4 499.2,380.2 499.2,375.4 500.0,348.2 500.0,388.1 500.9,341.1 500.9,359.1 501.7,377.3 501.7,364.2 502.5,376.1 502.5,376.1 503.3,370.2 503.3,428.8 504.0,370.6 504.1,344.6 504.8,381.7 504.8,359.5 505.6,373.0 505.6,387.4 506.4,351.1 506.4,428.7 507.1,380.6 507.1,334.1 507.9,383.3 507.9,354.6 508.6,365.7 508.6,356.8 509.3,364.7 509.4,377.1 510.1,358.9 510.1,421.5 510.8,372.8 510.8,376.6 511.5,371.4 511.5,395.9 512.2,386.3 512.2,367.6 512.9,375.8 512.9,357.5 513.8,365.7 513.8,353.9 514.9,381.6 514.9,357.9 515.9,404.6 515.9,345.8 516.9,358.3 516.9,369.0 517.9,365.5 517.9,417.5 518.9,362.8 518.9,392.2 519.9,347.1 519.9,392.7 520.8,393.8 520.8,360.9 521.8,412.6 521.8,390.5 522.7,388.9 522.7,368.7 523.7,346.5 523.7,357.3 524.6,362.9 524.6,348.4 525.5,424.0 525.5,377.2 526.4,401.1 526.4,366.0 527.3,381.5 527.3,400.3 528.2,359.9 528.2,365.7 529.0,417.4 529.1,362.3 529.9,375.9 529.9,426.1 530.8,403.3 530.8,374.4 531.6,352.5 531.6,379.8 532.4,424.8 532.5,355.8 533.3,401.2 533.3,345.8 534.1,395.3 534.1,375.8 534.9,378.4 534.9,353.1 535.7,403.2 535.7,349.5 536.5,397.9 536.5,371.9 537.3,401.3 537.3,364.6 538.1,418.4 538.1,356.7 538.9,350.4 538.9,362.9 539.6,391.6 539.7,423.1 540.4,345.6 540.4,364.0 541.2,359.2 541.2,406.9 541.9,391.4 541.9,368.1 542.7,367.8 542.7,373.9 543.4,345.3 543.4,372.3 544.1,355.2 544.1,409.5 544.8,365.1 544.9,384.2 545.6,375.2 545.6,347.6 546.3,366.6 546.3,410.6 547.0,394.6 547.0,342.3 547.8,457.3 547.8,364.2 548.7,412.4 548.7,382.6 549.6,356.8 549.6,382.9 550.5,355.9 550.5,396.0 551.4,355.5 551.4,390.2 552.3,384.6 552.3,369.3 553.2,387.0 553.2,358.1 554.0,350.6 554.0,390.6 554.9,376.4 554.9,365.0 555.7,416.1 555.8,355.4 556.6,349.7 556.6,392.0 557.4,364.6 557.4,376.1 558.2,362.7 558.2,387.8 559.0,396.6 559.1,345.4 559.9,377.4 559.9,347.8 560.6,343.2 560.7,388.4 561.4,365.4 561.5,399.9 562.2,376.0 562.2,341.4 563.0,356.4 563.0,382.5 563.8,381.7 563.8,346.0 564.5,361.2 564.5,386.7 565.3,377.8 565.3,344.2 566.0,365.4 566.0,415.5 566.8,387.3 566.8,339.9 567.5,411.4 567.5,362.5 568.2,361.3 568.2,383.4 569.0,368.8 569.0,392.3 569.7,374.1 569.7,357.1 570.4,353.4 570.4,399.3 571.1,394.7 571.1,367.1 571.9,395.4 571.9,350.2 572.7,350.4 572.7,392.3 573.6,380.0 573.6,349.5 574.4,461.8 574.5,360.8 575.3,383.2 575.3,345.7 576.1,356.8 576.1,382.7 576.9,351.1 576.9,400.4 577.7,352.0 577.8,383.1 578.5,426.0 578.6,358.0 579.3,352.6 579.4,387.5 580.1,349.2 580.1,394.9 580.9,357.5 580.9,422.0 581.7,359.5 581.7,402.8 582.5,402.2 582.5,360.9 583.2,379.5 583.2,352.3 584.0,353.3 584.0,394.6 584.7,373.9 584.7,366.0 585.5,379.0 585.5,360.4 586.2,395.5 586.2,339.7 586.9,413.9 586.9,348.7 587.7,357.7 587.7,370.3 588.4,400.9 588.4,350.9 589.1,356.0 589.1,386.9 589.8,390.4 589.8,406.0 590.5,355.4 590.6,395.8 591.4,387.6 591.4,349.2 592.2,385.5 592.2,357.7 593.0,376.8 593.0,342.9 593.8,382.6 593.8,341.6 594.6,390.0 594.6,356.0 595.4,417.0 595.4,347.3 596.2,403.1 596.2,363.8 597.0,348.8 597.0,370.2 597.7,354.2 597.7,452.5 598.5,359.0 598.5,392.2 599.2,355.2 599.3,386.6 600.0,356.4 600.0,400.3 600.7,335.0 600.7,397.3 601.5,343.5 601.5,384.0 602.2,398.2 602.2,354.5 602.9,349.0 602.9,391.8 603.6,384.6 603.6,346.5 604.3,360.8 604.3,395.2 605.1,373.5 605.1,348.9 605.9,347.7 605.9,385.8 606.7,353.7 606.7,393.6 607.5,339.2 607.5,416.9 608.3,416.6 608.3,353.5 609.1,404.7 609.1,353.3 609.9,353.5 609.9,375.6 610.6,404.0 610.6,355.8 611.4,398.4 611.4,364.9 612.1,405.4 612.2,356.1 612.9,388.7 612.9,344.6 613.6,349.5 613.6,413.1 614.4,405.5 614.4,344.4 615.1,344.3 615.1,437.4 615.8,349.1 615.8,380.3 616.5,389.0 616.5,345.4 617.2,398.5 617.2,347.7 618.0,344.6 618.0,437.2 618.8,347.1 618.8,410.2 619.6,344.7 619.6,441.8 620.4,356.8 620.4,395.5 621.1,446.3 621.1,349.9 621.9,417.4 621.9,369.5 622.7,353.8 622.7,393.0 623.4,363.9 623.4,429.5 624.2,396.2 624.2,349.4 624.9,415.3 624.9,334.5 625.6,362.4 625.6,387.1 626.4,397.6 626.4,344.0 627.1,353.8 627.1,393.4 627.8,435.4 627.8,342.2 628.5,349.9 628.5,397.1 629.2,409.8 629.3,355.8 630.0,395.6 630.0,333.7 630.8,394.6 630.8,355.0 631.6,400.2 631.6,346.8 632.3,355.7 632.3,386.9 633.1,412.4 633.1,347.2 633.8,341.9 633.8,408.1 634.6,407.6 634.6,353.7 635.3,397.7 635.3,348.6 636.0,426.9 636.0,345.2 636.8,348.2 636.8,385.4 637.5,333.0 637.5,430.1 638.2,352.1 638.2,404.2 638.9,387.5 638.9,345.6 639.6,342.6 639.6,377.6 640.4,355.6 640.4,389.7 641.1,356.9 641.2,417.5 641.9,414.5 641.9,352.5 642.7,385.7 642.7,346.3 643.4,395.3 643.4,331.0 644.1,398.7 644.1,346.6 644.9,385.4 644.9,343.1 645.6,349.1 645.6,392.5 646.3,352.3 646.3,393.0 647.0,407.5 647.0,348.7 647.7,357.4 647.7,425.2 648.4,347.4 648.4,424.8 649.2,339.1 649.2,409.0 649.9,388.7 650.0,344.1 650.7,343.8 650.7,416.1 651.4,347.9 651.4,401.3 652.2,429.6 652.2,348.3 652.9,425.7 652.9,347.7 653.6,354.3 653.6,421.4 654.3,349.5 654.3,398.8 655.0,353.2 655.0,426.2 655.8,358.0 655.8,427.9 656.5,399.7 656.5,338.7 657.3,416.7 657.3,346.7 658.0,406.1 658.0,346.1 658.8,360.0 658.8,489.8 659.5,460.4 659.5,342.8 660.2,357.7 660.2,451.1 661.0,349.4 661.0,408.9 661.7,344.5 661.7,434.8 662.4,360.1 662.4,408.2 663.1,419.4 663.1,355.4 663.9,346.1 663.9,406.5 664.6,344.8 664.6,405.3 665.3,354.3 665.4,408.9 666.1,433.8 666.1,351.5 666.8,427.2 666.8,346.8 667.5,337.1 667.5,399.4 668.2,345.6 668.3,394.8 669.0,350.5 669.0,419.3 669.7,447.5 669.7,350.7 670.4,340.5 670.4,402.8 671.2,350.9 671.2,430.9 671.9,448.4 671.9,349.0 672.6,442.1 672.7,342.6 673.4,393.9 673.4,343.1 674.1,344.0 674.1,423.3 674.8,411.9 674.8,352.4 675.5,407.0 675.5,348.3 676.2,392.4 676.2,352.6 677.0,413.2 677.0,343.1 677.7,408.8 677.7,343.1 678.4,355.8 678.4,431.2 679.2,422.3 679.2,343.9 679.9,437.9 679.9,356.6 680.6,416.8 680.6,339.0 681.3,348.4 681.3,390.3 682.0,345.5 682.0,395.8 682.8,347.1 682.8,414.0 683.5,441.0 683.5,340.4 684.2,337.4 684.2,404.8 684.9,421.3 684.9,349.0 685.7,344.4 685.7,415.4 686.4,344.1 686.4,403.2 687.1,412.4 687.1,347.1 687.8,345.4 687.8,408.8 688.6,347.9 688.6,409.8 689.3,405.3 689.3,346.7 690.0,414.3 690.0,352.3 690.7,420.7 690.7,344.7 691.4,346.1 691.4,408.9 692.2,352.4 692.2,437.2 692.9,347.0 692.9,417.9 693.6,344.2 693.6,415.9 694.3,448.9 694.4,347.7 695.1,355.2 695.1,406.7 695.8,412.6 695.8,345.4 696.5,451.5 696.5,350.1 697.2,389.3 697.2,348.1 697.9,350.0 697.9,405.6 698.7,346.1 698.7,409.5 699.4,421.1 699.4,344.1 700.1,339.7 700.1,433.2 700.8,339.9 700.8,428.5 701.5,417.3 701.5,346.7 702.3,340.9 702.3,403.1 703.0,339.3 703.0,421.0 703.7,429.5 703.7,347.1 704.4,436.5 704.4,342.4 705.1,401.8 705.1,355.2 705.8,423.5 705.8,341.6 706.6,436.6 706.6,352.1 707.3,396.7 707.3,341.5 708.0,349.3 708.0,412.2 708.7,411.8 708.7,338.6 709.4,413.0 709.4,351.6 710.1,354.4 710.1,426.6 710.9,412.3 710.9,342.4 711.6,343.1 711.6,477.3 712.3,390.3 712.3,345.7 713.0,349.0 713.0,409.2 713.7,411.4 713.7,347.9 714.5,341.1 714.5,438.1 715.2,343.9 715.2,447.9 715.9,405.1 715.9,337.5 716.6,341.8 716.6,413.0 717.3,347.0 717.3,435.9 718.0,409.4 718.1,351.9 718.8,347.1 718.8,446.9 719.5,443.3 719.5,343.7 720.2,419.8 720.2,339.7 720.9,423.6 720.9,349.3 721.6,348.5 721.6,426.5 722.3,432.3 722.4,342.5 723.1,400.8 723.1,352.2 723.8,354.5 723.8,418.8 724.5,346.9 724.5,429.6 725.2,342.1 725.2,431.4 725.9,343.3 725.9,448.5 726.6,346.5 726.6,424.1 727.3,396.3 727.3,339.8 728.1,417.4 728.1,346.2 728.8,413.0 728.8,341.3 729.5,410.5 729.5,343.0 730.2,456.2 730.2,348.2 730.9,454.9 730.9,349.3 731.6,441.0 731.6,341.6 732.3,488.5 732.4,341.2 733.1,406.4 733.1,339.7 733.8,432.2 733.8,346.0 734.5,345.8 734.5,430.8 735.2,344.1 735.2,406.5 735.9,428.7 735.9,345.7 736.6,446.9 736.6,343.0 737.3,404.8 737.3,332.6 738.0,399.5 738.1,348.6 738.7,332.7 738.8,413.3 739.5,346.1 739.5,430.2 740.2,424.4 740.2,340.9 740.9,346.6 740.9,432.5 741.6,338.1 741.6,407.7 742.3,344.3 742.3,456.5 743.0,342.8 743.0,441.1 743.7,415.3 743.7,344.7 744.4,343.1 744.4,448.0 745.1,340.9 745.2,433.8 745.9,350.2 745.9,438.8 746.6,395.7 746.6,343.0 747.3,423.9 747.3,335.0 748.0,338.5 748.0,441.0 748.7,340.2 748.7,434.3 749.4,351.6 749.4,418.1 750.1,341.1 750.1,412.7 750.8,397.7 750.8,340.5 751.5,343.1 751.6,443.2 752.3,421.7 752.3,337.5 753.0,343.6 753.0,423.8 753.7,342.5 753.7,444.8 754.4,341.8 754.4,415.2 755.1,337.8 755.1,412.1 755.8,413.2 755.8,349.6 756.5,343.4 756.5,421.9 757.2,474.5 757.2,337.9 757.9,429.8 757.9,343.5 758.6,491.4 758.6,343.0 759.4,335.4 759.4,423.1 760.1,345.0 760.1,429.3 760.8,346.6 760.8,417.9 761.5,425.6 761.5,345.3 762.2,415.2 762.2,338.4 762.9,339.3 762.9,408.0 763.6,346.9 763.6,413.0 764.3,439.0 764.3,337.7 765.0,439.3 765.0,350.8 765.7,459.1 765.8,350.5 766.5,341.9 766.5,415.6 767.1,419.0 767.1,341.2" stroke="#e8308c" stroke-width="2" fill="none" stroke-linejoin="miter" stroke-miterlimit="3"/></g></svg>
<div class="b" style="left:752px;top:51px;width:15px;height:15px;background:#4a4a4a;border:1px solid #b4b4b4;box-sizing:border-box;"></div>
<svg class="b" style="left:752px;top:51px;" width="15" height="15" viewBox="0 0 15 15"><path d="M4 9.3L7.5 6L11 9.3" stroke="#c0c0c0" stroke-width="1.3" fill="none"/></svg>
<div class="b" style="left:665px;top:124px;width:87px;height:64px;background:#a8a8a8;"></div>
<div class="b" style="left:738px;top:124px;width:14px;height:15px;background:#9b9b9b;border:1px solid #787878;box-sizing:border-box;"></div>
<svg class="b" style="left:738px;top:124px;" width="14" height="15" viewBox="0 0 14 15"><path d="M3.5 8.8L7 5.6L10.5 8.8" stroke="#848484" stroke-width="1.2" fill="none"/></svg>
<div class="b" style="left:670px;top:135px;width:16px;height:2px;background:#e8308c;"></div>
<span class="t" style="top:130.90px;font-size:12px;color:#000;letter-spacing:-0.250px;left:690px;transform:scaleX(0.8797);transform-origin:left center;">Vg_a</span>
<span class="t" style="top:130.90px;font-size:12px;color:#000;letter-spacing:0.664px;left:720.5px;">[-]</span>
<div class="b" style="left:670px;top:155px;width:16px;height:2px;background:#3a64b4;"></div>
<span class="t" style="top:150.70px;font-size:12px;color:#000;letter-spacing:-0.250px;left:690px;transform:scaleX(0.8981);transform-origin:left center;">Vg_b</span>
<span class="t" style="top:150.70px;font-size:12px;color:#000;letter-spacing:0.664px;left:721.5px;">[-]</span>
<div class="b" style="left:670px;top:175px;width:16px;height:2px;background:#6cc22e;"></div>
<span class="t" style="top:170.50px;font-size:12px;color:#000;letter-spacing:-0.250px;left:690px;transform:scaleX(0.9019);transform-origin:left center;">Vg_c</span>
<span class="t" style="top:170.50px;font-size:12px;color:#000;letter-spacing:0.664px;left:720.5px;">[-]</span>
<span class="t" style="top:164.50px;font-size:12px;color:#e0e0e0;letter-spacing:-0.250px;right:966.3px;margin-right:0.250px;transform:scaleX(0.9165);transform-origin:right center;">100</span>
<span class="t" style="top:236.90px;font-size:12px;color:#e0e0e0;letter-spacing:-0.250px;right:966.3px;margin-right:0.250px;transform:scaleX(0.8315);transform-origin:right center;">10</span>
<span class="t" style="top:309.30px;font-size:12px;color:#e0e0e0;letter-spacing:0.000px;right:966.3px;margin-right:0.000px;">1</span>
<span class="t" style="top:381.70px;font-size:12px;color:#e0e0e0;letter-spacing:-0.250px;right:966.3px;margin-right:0.250px;transform:scaleX(0.8587);transform-origin:right center;">0.1</span>
<span class="t" style="top:454.10px;font-size:12px;color:#e0e0e0;letter-spacing:-0.250px;right:966.3px;margin-right:0.250px;transform:scaleX(0.8934);transform-origin:right center;">0.01</span>
<span class="t" style="top:545.30px;font-size:12px;color:#e0e0e0;letter-spacing:-0.250px;left:-144.2px;width:400px;text-align:center;text-indent:-0.250px;transform:scaleX(0.9388);transform-origin:center center;">10&nbsp;Hz</span>
<span class="t" style="top:545.30px;font-size:12px;color:#e0e0e0;letter-spacing:-0.250px;left:48.099999999999994px;width:400px;text-align:center;text-indent:-0.250px;transform:scaleX(0.9244);transform-origin:center center;">100&nbsp;Hz</span>
<span class="t" style="top:545.30px;font-size:12px;color:#e0e0e0;letter-spacing:-0.250px;left:240.40000000000003px;width:400px;text-align:center;text-indent:-0.250px;transform:scaleX(0.9634);transform-origin:center center;">1&nbsp;kHz</span>
<span class="t" style="top:545.30px;font-size:12px;color:#e0e0e0;letter-spacing:-0.250px;left:432.70000000000016px;width:400px;text-align:center;text-indent:-0.250px;transform:scaleX(0.9554);transform-origin:center center;">10&nbsp;kHz</span>
<div class="b" style="left:47px;top:564px;width:20px;height:20px;background:#616161;border:2px solid #9a9a9a;border-radius:3.5px;box-sizing:border-box;"></div>
<svg class="b" style="left:47px;top:564px;" width="20" height="20" viewBox="0 0 20 20"><rect x="6" y="6" width="8" height="8" rx="1.6" fill="#d2d2d2"/></svg>
<div class="b" style="left:71px;top:564px;width:20px;height:20px;background:#616161;border:2px solid #9a9a9a;border-radius:3.5px;box-sizing:border-box;"></div>
<svg class="b" style="left:71px;top:564px;" width="20" height="20" viewBox="0 0 20 20"><path d="M7 7.2L13 13.2" stroke="#d2d2d2" stroke-width="2.6"/><path d="M4.8 5H10.2L4.8 10.4Z M15.2 15.2H9.8L15.2 9.8Z" fill="#d2d2d2"/></svg>
<div class="b" style="left:95px;top:564px;width:20px;height:20px;background:#616161;border:2px solid #9a9a9a;border-radius:3.5px;box-sizing:border-box;"></div>
<svg class="b" style="left:95px;top:564px;" width="20" height="20" viewBox="0 0 20 20"><path d="M6 10.2H14" stroke="#d2d2d2" stroke-width="2.7"/><path d="M2.8 10.2L7 6.6V13.8Z M17.2 10.2L13 6.6V13.8Z" fill="#d2d2d2"/></svg>
<div class="b" style="left:119px;top:564px;width:20px;height:20px;background:#616161;border:2px solid #9a9a9a;border-radius:3.5px;box-sizing:border-box;"></div>
<svg class="b" style="left:119px;top:564px;" width="20" height="20" viewBox="0 0 20 20"><path d="M10 6V14" stroke="#d2d2d2" stroke-width="2.7"/><path d="M10 2.8L6.4 7H13.6Z M10 17.4L6.4 13.2H13.6Z" fill="#d2d2d2"/></svg>
<div class="b" style="left:151px;top:564px;width:20px;height:20px;background:#616161;border:2px solid #9a9a9a;border-radius:3.5px;box-sizing:border-box;"></div>
<svg class="b" style="left:151px;top:564px;" width="20" height="20" viewBox="0 0 20 20"><circle cx="10" cy="9.9" r="5.1" stroke="#d2d2d2" stroke-width="2.1" fill="none"/><path d="M10 2.4V7.4M10 12.4V17.4M2.5 9.9H7.5M12.5 9.9H17.5" stroke="#d2d2d2" stroke-width="2.1"/></svg>
<div class="b" style="left:183px;top:564px;width:100px;height:20px;background:#008000;border-radius:3px;"></div>
<span class="t" style="top:567.91px;font-size:12.5px;color:#ffffff;letter-spacing:-0.250px;font-weight:bold;left:33px;width:400px;text-align:center;text-indent:-0.250px;transform:scaleX(0.9636);transform-origin:center center;">ACQUIRING</span>
<div class="b" style="left:295px;top:568px;width:415px;height:12px;border:1px solid #858585;border-radius:4px;box-sizing:border-box;"></div>
<div class="b" style="left:298px;top:571px;width:3px;height:6px;background:#848484;"></div>
<div class="b" style="left:303px;top:571px;width:3px;height:6px;background:#848484;"></div>
<div class="b" style="left:308px;top:571px;width:3px;height:6px;background:#848484;"></div>
<div class="b" style="left:313px;top:571px;width:3px;height:6px;background:#848484;"></div>
<div class="b" style="left:318px;top:571px;width:3px;height:6px;background:#848484;"></div>
<div class="b" style="left:323px;top:571px;width:3px;height:6px;background:#848484;"></div>
<div class="b" style="left:328px;top:571px;width:3px;height:6px;background:#848484;"></div>
<div class="b" style="left:333px;top:571px;width:3px;height:6px;background:#848484;"></div>
<div class="b" style="left:338px;top:571px;width:3px;height:6px;background:#848484;"></div>
<div class="b" style="left:343px;top:571px;width:3px;height:6px;background:#848484;"></div>
<div class="b" style="left:348px;top:571px;width:3px;height:6px;background:#848484;"></div>
<div class="b" style="left:353px;top:571px;width:3px;height:6px;background:#848484;"></div>
<div class="b" style="left:358px;top:571px;width:3px;height:6px;background:#848484;"></div>
<div class="b" style="left:363px;top:571px;width:3px;height:6px;background:#848484;"></div>
<div class="b" style="left:368px;top:571px;width:3px;height:6px;background:#848484;"></div>
<div class="b" style="left:373px;top:571px;width:3px;height:6px;background:#848484;"></div>
<div class="b" style="left:722px;top:564px;width:20px;height:20px;background:#616161;border:2px solid #9a9a9a;border-radius:3.5px;box-sizing:border-box;"></div>
<svg class="b" style="left:722px;top:564px;" width="20" height="20" viewBox="0 0 20 20"><path d="M3 9.2H17M3 11.3H17" stroke="#bcbcbc" stroke-width="1.3"/><path d="M10 3V6.5M10 17V13.5" stroke="#d2d2d2" stroke-width="1.1"/><path d="M10 7.5L8 5H12Z M10 12.8L8 15.3H12Z" fill="#d2d2d2"/></svg>
<div class="b" style="left:747px;top:564px;width:20px;height:20px;background:#616161;border:2px solid #9a9a9a;border-radius:3.5px;box-sizing:border-box;"></div>
<svg class="b" style="left:747px;top:564px;" width="20" height="20" viewBox="0 0 20 20"><path d="M10 5V15M5 10H15" stroke="#f0f0f0" stroke-width="2"/></svg>
<div class="b" style="left:8px;top:622px;width:766px;height:149px;background:#404040;border:1px solid #868686;border-radius:4px;box-sizing:border-box;border-top-left-radius:0;"></div>
<div class="b" style="left:68px;top:599.4px;width:56px;height:22.6px;background:#626262;border-radius:4px;border-bottom-left-radius:0;border-bottom-right-radius:0;"></div>
<div class="b" style="left:8px;top:599px;width:58px;height:25px;background:#4d4d4d;border:1px solid #868686;border-radius:4px;box-sizing:border-box;border-bottom:none;border-bottom-left-radius:0;border-bottom-right-radius:0;"></div>
<span class="t" style="top:606.17px;font-size:11px;color:#f0f0f0;letter-spacing:0.097px;font-weight:bold;left:17.3px;">PLOT&nbsp;0</span>
<span class="t" style="top:605.07px;font-size:11px;color:#a2a2a2;letter-spacing:-0.103px;font-weight:bold;left:76.5px;">PLOT&nbsp;1</span>
<div class="b" style="left:758px;top:600px;width:16px;height:15.6px;background:#4e4e4e;border-radius:3px;"></div>
<svg class="b" style="left:758px;top:600px;" width="16" height="15" viewBox="0 0 16 15"><path d="M4 5.5L8 9.5L12 5.5" stroke="#c4c4c4" stroke-width="1.5" fill="none"/></svg>
<div class="b" style="left:9px;top:623px;width:763px;height:28px;background:#4d4d4d;"></div>
<div class="b" style="left:9px;top:651px;width:763px;height:1px;background:#333;"></div>
<div class="b" style="left:9px;top:680px;width:763px;height:1px;background:#333;"></div>
<div class="b" style="left:9px;top:709px;width:763px;height:1px;background:#333;"></div>
<div class="b" style="left:9px;top:738px;width:763px;height:1px;background:#333;"></div>
<div class="b" style="left:48px;top:623px;width:1px;height:116px;background:#333;"></div>
<div class="b" style="left:212px;top:623px;width:1px;height:116px;background:#333;"></div>
<div class="b" style="left:312px;top:623px;width:1px;height:116px;background:#333;"></div>
<div class="b" style="left:412px;top:623px;width:1px;height:116px;background:#333;"></div>
<div class="b" style="left:512px;top:623px;width:1px;height:116px;background:#333;"></div>
<span class="t" style="top:633.60px;font-size:12px;color:#f0f0f0;letter-spacing:0.328px;font-weight:bold;left:-171.5px;width:400px;text-align:center;text-indent:0.328px;">Style</span>
<span class="t" style="top:633.60px;font-size:12px;color:#f0f0f0;letter-spacing:0.138px;font-weight:bold;left:-70px;width:400px;text-align:center;text-indent:0.138px;">Variable</span>
<span class="t" style="top:633.60px;font-size:12px;color:#f0f0f0;letter-spacing:0.391px;font-weight:bold;left:62px;width:400px;text-align:center;text-indent:0.391px;">Subplot</span>
<span class="t" style="top:633.60px;font-size:12px;color:#f0f0f0;letter-spacing:0.000px;font-weight:bold;left:162px;width:400px;text-align:center;text-indent:0.000px;">Units</span>
<div class="b" style="left:19px;top:656px;width:20.6px;height:20.4px;background:#000;border:1px solid #6a6a6a;border-radius:3.5px;box-sizing:border-box;"></div>
<div class="b" style="left:21px;top:665px;width:17px;height:2px;background:#e8308c;"></div>
<span class="t m" style="top:660.73px;font-size:13px;color:#e6e6e6;letter-spacing:-0.250px;left:57px;transform:scaleX(0.8862);transform-origin:left center;">Vg_a</span>
<svg class="b" style="left:190px;top:659px;" width="16" height="14" viewBox="0 0 16 14"><path d="M1 7C3 3.2 5.5 1.8 8 1.8C10.5 1.8 13 3.2 15 7C13 10.8 10.5 12.2 8 12.2C5.5 12.2 3 10.8 1 7Z" fill="#f2f2f2"/><circle cx="8" cy="7" r="3.4" fill="#404040"/><circle cx="8" cy="7" r="1.9" fill="#f2f2f2"/></svg>
<div class="b" style="left:217px;top:656px;width:91px;height:20px;background:#4b4b4b;border-radius:3px;"></div>
<span class="t m" style="top:660.73px;font-size:13px;color:#e6e6e6;letter-spacing:-0.250px;left:219px;transform:scaleX(0.9235);transform-origin:left center;">Subplot&nbsp;0</span>
<div class="b" style="left:290px;top:658px;width:16px;height:16px;background:#848484;border-radius:2.5px;"></div>
<svg class="b" style="left:290px;top:658px;" width="16" height="16" viewBox="0 0 16 16"><path d="M4 6L8 10L12 6" stroke="#4c4c4c" stroke-width="1.4" fill="none"/></svg>
<span class="t m" style="top:661.02px;font-size:13px;color:#e6e6e6;letter-spacing:0.000px;left:320.5px;">-</span>
<div class="b" style="left:19px;top:685px;width:20.6px;height:20.4px;background:#000;border:1px solid #6a6a6a;border-radius:3.5px;box-sizing:border-box;"></div>
<div class="b" style="left:21px;top:694px;width:17px;height:2px;background:#3a64b4;"></div>
<span class="t m" style="top:689.73px;font-size:13px;color:#e6e6e6;letter-spacing:-0.250px;left:57px;transform:scaleX(0.8862);transform-origin:left center;">Vg_b</span>
<svg class="b" style="left:190px;top:688px;" width="16" height="14" viewBox="0 0 16 14"><path d="M1 7C3 3.2 5.5 1.8 8 1.8C10.5 1.8 13 3.2 15 7C13 10.8 10.5 12.2 8 12.2C5.5 12.2 3 10.8 1 7Z" fill="#f2f2f2"/><circle cx="8" cy="7" r="3.4" fill="#404040"/><circle cx="8" cy="7" r="1.9" fill="#f2f2f2"/></svg>
<div class="b" style="left:217px;top:685px;width:91px;height:20px;background:#4b4b4b;border-radius:3px;"></div>
<span class="t m" style="top:689.73px;font-size:13px;color:#e6e6e6;letter-spacing:-0.250px;left:219px;transform:scaleX(0.9235);transform-origin:left center;">Subplot&nbsp;0</span>
<div class="b" style="left:290px;top:687px;width:16px;height:16px;background:#848484;border-radius:2.5px;"></div>
<svg class="b" style="left:290px;top:687px;" width="16" height="16" viewBox="0 0 16 16"><path d="M4 6L8 10L12 6" stroke="#4c4c4c" stroke-width="1.4" fill="none"/></svg>
<span class="t m" style="top:690.02px;font-size:13px;color:#e6e6e6;letter-spacing:0.000px;left:320.5px;">-</span>
<div class="b" style="left:19px;top:714px;width:20.6px;height:20.4px;background:#000;border:1px solid #6a6a6a;border-radius:3.5px;box-sizing:border-box;"></div>
<div class="b" style="left:21px;top:723px;width:17px;height:2px;background:#6cc22e;"></div>
<span class="t m" style="top:718.73px;font-size:13px;color:#e6e6e6;letter-spacing:-0.250px;left:57px;transform:scaleX(0.8862);transform-origin:left center;">Vg_c</span>
<svg class="b" style="left:190px;top:717px;" width="16" height="14" viewBox="0 0 16 14"><path d="M1 7C3 3.2 5.5 1.8 8 1.8C10.5 1.8 13 3.2 15 7C13 10.8 10.5 12.2 8 12.2C5.5 12.2 3 10.8 1 7Z" fill="#f2f2f2"/><circle cx="8" cy="7" r="3.4" fill="#404040"/><circle cx="8" cy="7" r="1.9" fill="#f2f2f2"/></svg>
<div class="b" style="left:217px;top:714px;width:91px;height:20px;background:#4b4b4b;border-radius:3px;"></div>
<span class="t m" style="top:718.73px;font-size:13px;color:#e6e6e6;letter-spacing:-0.250px;left:219px;transform:scaleX(0.9235);transform-origin:left center;">Subplot&nbsp;0</span>
<div class="b" style="left:290px;top:716px;width:16px;height:16px;background:#848484;border-radius:2.5px;"></div>
<svg class="b" style="left:290px;top:716px;" width="16" height="16" viewBox="0 0 16 16"><path d="M4 6L8 10L12 6" stroke="#4c4c4c" stroke-width="1.4" fill="none"/></svg>
<span class="t m" style="top:719.02px;font-size:13px;color:#e6e6e6;letter-spacing:0.000px;left:320.5px;">-</span>
<div class="b" style="left:984px;top:47px;width:16px;height:16px;background:#4e4e4e;border-radius:3px;"></div>
<svg class="b" style="left:984px;top:47px;" width="16" height="16" viewBox="0 0 16 16"><path d="M6 4L10 8L6 12" stroke="#c4c4c4" stroke-width="1.5" fill="none"/></svg>
<div class="b" style="left:782px;top:70px;width:217px;height:420px;background:#4e4e4e;border:1px solid #868686;border-radius:4px;box-sizing:border-box;"></div>
<svg class="b" style="left:790px;top:80.5px;" width="10" height="8" viewBox="0 0 10 8"><path d="M1.5 2L5 5.5L8.5 2" stroke="#c8c8c8" stroke-width="1.4" fill="none"/></svg>
<span class="t" style="top:78.70px;font-size:12px;color:#e4e4e4;letter-spacing:-0.003px;font-weight:bold;left:806px;">PLOT&nbsp;0</span>
<div class="b" style="left:787px;top:97px;width:207px;height:150px;background:#676767;border-radius:4px;"></div>
<div class="b" style="left:787px;top:97px;width:207px;height:23px;background:#616161;border-radius:4px;border-bottom-left-radius:0;border-bottom-right-radius:0;"></div>
<div class="b" style="left:787px;top:119px;width:207px;height:1px;background:#929292;"></div>
<svg class="b" style="left:792px;top:104.5px;" width="10" height="8" viewBox="0 0 10 8"><path d="M1.5 2L5 5.5L8.5 2" stroke="#c8c8c8" stroke-width="1.4" fill="none"/></svg>
<span class="t" style="top:102.80px;font-size:12px;color:#e4e4e4;letter-spacing:-0.031px;font-weight:bold;left:808px;">FFT&nbsp;SETTINGS</span>
<div class="b" style="left:787px;top:252px;width:207px;height:101px;background:#676767;border-radius:4px;"></div>
<div class="b" style="left:787px;top:252px;width:207px;height:22px;background:#616161;border-radius:4px;border-bottom-left-radius:0;border-bottom-right-radius:0;"></div>
<div class="b" style="left:787px;top:273px;width:207px;height:1px;background:#929292;"></div>
<svg class="b" style="left:792px;top:259.0px;" width="10" height="8" viewBox="0 0 10 8"><path d="M1.5 2L5 5.5L8.5 2" stroke="#c8c8c8" stroke-width="1.4" fill="none"/></svg>
<span class="t" style="top:257.30px;font-size:12px;color:#e4e4e4;letter-spacing:0.328px;font-weight:bold;left:808px;">X&nbsp;AXIS</span>
<div class="b" style="left:787px;top:358.4px;width:207px;height:126.60000000000002px;background:#676767;border-radius:4px;"></div>
<div class="b" style="left:787px;top:358.4px;width:207px;height:22.0px;background:#616161;border-radius:4px;border-bottom-left-radius:0;border-bottom-right-radius:0;"></div>
<div class="b" style="left:787px;top:379.4px;width:207px;height:1px;background:#929292;"></div>
<svg class="b" style="left:792px;top:365.4px;" width="10" height="8" viewBox="0 0 10 8"><path d="M1.5 2L5 5.5L8.5 2" stroke="#c8c8c8" stroke-width="1.4" fill="none"/></svg>
<span class="t" style="top:363.70px;font-size:12px;color:#e4e4e4;letter-spacing:0.131px;font-weight:bold;left:808px;">SUBPLOT&nbsp;0&nbsp;Y&nbsp;AXIS</span>
<span class="t" style="top:131.10px;font-size:12px;color:#dcdcdc;letter-spacing:-0.020px;left:793px;">View&nbsp;mode</span>
<div class="b" style="left:863px;top:126.3px;width:126.5px;height:19.4px;background:#4b4b4b;border-radius:3px;"></div>
<span class="t" style="top:131.40px;font-size:12px;color:#e4e4e4;letter-spacing:-0.194px;left:865.5px;">Spectrum</span>
<div class="b" style="left:972.0px;top:128px;width:16px;height:16px;background:#8c8c8c;border-radius:2.5px;"></div>
<svg class="b" style="left:972.0px;top:128px;" width="16" height="16" viewBox="0 0 16 16"><path d="M3.8 6.6L8 10.8L12.2 6.6" stroke="#4a4a4a" stroke-width="1.3" fill="none"/></svg>
<span class="t" style="top:155.10px;font-size:12px;color:#dcdcdc;letter-spacing:-0.078px;left:793px;">Resolution</span>
<div class="b" style="left:863px;top:150.3px;width:104px;height:19.4px;background:#4b4b4b;border-radius:3px;"></div>
<span class="t" style="top:155.40px;font-size:12px;color:#e4e4e4;letter-spacing:-0.250px;left:867px;transform:scaleX(0.9300);transform-origin:left center;">10.00</span>
<span class="t" style="top:155.10px;font-size:12px;color:#dcdcdc;letter-spacing:-0.250px;left:972.5px;transform:scaleX(0.9707);transform-origin:left center;">Hz</span>
<span class="t" style="top:179.10px;font-size:12px;color:#dcdcdc;letter-spacing:-0.136px;left:793px;">Window&nbsp;size</span>
<div class="b" style="left:863px;top:174.3px;width:104px;height:19.4px;background:#4b4b4b;border-radius:3px;"></div>
<span class="t" style="top:179.40px;font-size:12px;color:#e4e4e4;letter-spacing:-0.250px;left:867px;transform:scaleX(0.9728);transform-origin:left center;">100</span>
<span class="t" style="top:179.10px;font-size:12px;color:#dcdcdc;letter-spacing:-0.250px;left:972.5px;transform:scaleX(0.9841);transform-origin:left center;">ms</span>
<span class="t" style="top:203.10px;font-size:12px;color:#dcdcdc;letter-spacing:0.162px;left:793px;">Windowing</span>
<div class="b" style="left:863px;top:198.3px;width:126.5px;height:19.4px;background:#4b4b4b;border-radius:3px;"></div>
<span class="t" style="top:203.40px;font-size:12px;color:#e4e4e4;letter-spacing:-0.172px;left:865.5px;">Rectangular</span>
<div class="b" style="left:972.0px;top:200px;width:16px;height:16px;background:#8c8c8c;border-radius:2.5px;"></div>
<svg class="b" style="left:972.0px;top:200px;" width="16" height="16" viewBox="0 0 16 16"><path d="M3.8 6.6L8 10.8L12.2 6.6" stroke="#4a4a4a" stroke-width="1.3" fill="none"/></svg>
<span class="t" style="top:227.10px;font-size:12px;color:#dcdcdc;letter-spacing:-0.250px;left:793px;transform:scaleX(0.9967);transform-origin:left center;">Sample&nbsp;rate</span>
<span class="t m" style="top:227.03px;font-size:13px;color:#dcdcdc;letter-spacing:-0.250px;left:866.5px;transform:scaleX(0.9168);transform-origin:left center;">100</span>
<span class="t" style="top:227.10px;font-size:12px;color:#dcdcdc;letter-spacing:-0.250px;left:894px;transform:scaleX(0.9915);transform-origin:left center;">kHz</span>
<span class="t" style="top:285.00px;font-size:12px;color:#dcdcdc;letter-spacing:-0.250px;left:792px;transform:scaleX(0.9300);transform-origin:left center;">Scale</span>
<div class="b" style="left:846px;top:280.2px;width:143.5px;height:19.4px;background:#4b4b4b;border-radius:3px;"></div>
<span class="t" style="top:285.20px;font-size:12px;color:#e4e4e4;letter-spacing:-0.250px;left:848.5px;transform:scaleX(0.9884);transform-origin:left center;">Log10</span>
<div class="b" style="left:972.0px;top:281.9px;width:16px;height:16px;background:#8c8c8c;border-radius:2.5px;"></div>
<svg class="b" style="left:972.0px;top:281.9px;" width="16" height="16" viewBox="0 0 16 16"><path d="M3.8 6.6L8 10.8L12.2 6.6" stroke="#4a4a4a" stroke-width="1.3" fill="none"/></svg>
<span class="t" style="top:309.00px;font-size:12px;color:#dcdcdc;letter-spacing:-0.192px;left:792px;">Max&nbsp;[Hz]</span>
<div class="b" style="left:846px;top:304.2px;width:143.5px;height:19.4px;background:#4b4b4b;border-radius:3px;"></div>
<span class="t" style="top:309.20px;font-size:12px;color:#e4e4e4;letter-spacing:-0.250px;left:850px;transform:scaleX(0.9266);transform-origin:left center;">50000</span>
<div class="b" style="left:972.0px;top:305.9px;width:16px;height:7.3px;background:#8a8a8a;border-radius:2px;"></div>
<div class="b" style="left:972.0px;top:315.09999999999997px;width:16px;height:7px;background:#8a8a8a;border-radius:2px;"></div>
<svg class="b" style="left:972.0px;top:303.9px;" width="16" height="20" viewBox="0 0 16 20"><path d="M4 7.6L8 3.9L12 7.6M4 12.7L8 16.4L12 12.7" stroke="#4a4a4a" stroke-width="1.2" fill="none"/></svg>
<span class="t" style="top:333.00px;font-size:12px;color:#dcdcdc;letter-spacing:-0.002px;left:792px;">Min&nbsp;[Hz]</span>
<div class="b" style="left:846px;top:328.2px;width:143.5px;height:19.4px;background:#4b4b4b;border-radius:3px;"></div>
<span class="t" style="top:333.20px;font-size:12px;color:#e4e4e4;letter-spacing:-0.250px;left:850px;transform:scaleX(0.9320);transform-origin:left center;">9</span>
<div class="b" style="left:972.0px;top:329.9px;width:16px;height:7.3px;background:#8a8a8a;border-radius:2px;"></div>
<div class="b" style="left:972.0px;top:339.09999999999997px;width:16px;height:7px;background:#8a8a8a;border-radius:2px;"></div>
<svg class="b" style="left:972.0px;top:327.9px;" width="16" height="20" viewBox="0 0 16 20"><path d="M4 7.6L8 3.9L12 7.6M4 12.7L8 16.4L12 12.7" stroke="#4a4a4a" stroke-width="1.2" fill="none"/></svg>
<svg class="b" style="left:970.6px;top:361.6px;" width="15.2" height="15.2" viewBox="0 0 14 14"><path d="M2.2 5.5V3.6C2.2 1.2 6.2 1.2 6.2 3.6V4.2" stroke="#e8e8e8" stroke-width="1.5" fill="none"/><rect x="4" y="5.6" width="8.6" height="7" rx="1" fill="#e8e8e8"/></svg>
<span class="t" style="top:391.60px;font-size:12px;color:#dcdcdc;letter-spacing:-0.250px;left:792px;transform:scaleX(0.9300);transform-origin:left center;">Scale</span>
<div class="b" style="left:840px;top:387.3px;width:149.5px;height:19.4px;background:#4b4b4b;border-radius:3px;"></div>
<span class="t" style="top:391.90px;font-size:12px;color:#e4e4e4;letter-spacing:-0.125px;left:842.5px;">Absolute,&nbsp;Log10</span>
<div class="b" style="left:972.0px;top:389px;width:16px;height:16px;background:#8c8c8c;border-radius:2.5px;"></div>
<svg class="b" style="left:972.0px;top:389px;" width="16" height="16" viewBox="0 0 16 16"><path d="M3.8 6.6L8 10.8L12.2 6.6" stroke="#4a4a4a" stroke-width="1.3" fill="none"/></svg>
<span class="t" style="top:415.60px;font-size:12px;color:#dcdcdc;letter-spacing:-0.250px;left:792px;transform:scaleX(0.9758);transform-origin:left center;">Ref.&nbsp;val.</span>
<div class="b" style="left:840px;top:411.3px;width:124px;height:19.4px;background:#585858;border-radius:3px;"></div>
<span class="t" style="top:415.90px;font-size:12px;color:#7c7c7c;letter-spacing:-0.250px;left:844px;transform:scaleX(0.7767);transform-origin:left center;">1</span>
<div class="b" style="left:946.5px;top:413px;width:16px;height:7.3px;background:#6c6c6c;border-radius:2px;"></div>
<div class="b" style="left:946.5px;top:422.2px;width:16px;height:7px;background:#6c6c6c;border-radius:2px;"></div>
<svg class="b" style="left:946.5px;top:411px;" width="16" height="20" viewBox="0 0 16 20"><path d="M4 7.6L8 3.9L12 7.6M4 12.7L8 16.4L12 12.7" stroke="#5a5a5a" stroke-width="1.2" fill="none"/></svg>
<div class="b" style="left:970px;top:411px;width:20px;height:19.6px;background:#3a3a3a;border:2px solid #747474;border-radius:3px;box-sizing:border-box;"></div>
<svg class="b" style="left:970px;top:411px;" width="20" height="20" viewBox="0 0 20 20"><path d="M3.4 16.8C5 9 7.5 4.4 9.8 4.4C12.2 4.4 14.6 9 16.4 16.8" stroke="#a4a4a4" stroke-width="1.2" fill="none"/><path d="M13 7L17.5 2.6V10.2Z" fill="#8e8e8e"/></svg>
<span class="t" style="top:439.60px;font-size:12px;color:#dcdcdc;letter-spacing:-0.250px;left:792px;transform:scaleX(0.9922);transform-origin:left center;">Max</span>
<div class="b" style="left:840px;top:435.3px;width:149.5px;height:19.4px;background:#4b4b4b;border-radius:3px;"></div>
<span class="t" style="top:439.90px;font-size:12px;color:#e4e4e4;letter-spacing:-0.250px;left:844px;transform:scaleX(0.9320);transform-origin:left center;">430.942159</span>
<div class="b" style="left:972.0px;top:437px;width:16px;height:7.3px;background:#8a8a8a;border-radius:2px;"></div>
<div class="b" style="left:972.0px;top:446.2px;width:16px;height:7px;background:#8a8a8a;border-radius:2px;"></div>
<svg class="b" style="left:972.0px;top:435px;" width="16" height="20" viewBox="0 0 16 20"><path d="M4 7.6L8 3.9L12 7.6M4 12.7L8 16.4L12 12.7" stroke="#4a4a4a" stroke-width="1.2" fill="none"/></svg>
<span class="t" style="top:463.60px;font-size:12px;color:#dcdcdc;letter-spacing:0.328px;left:792px;">Min</span>
<div class="b" style="left:840px;top:459.3px;width:149.5px;height:19.4px;background:#4b4b4b;border-radius:3px;"></div>
<span class="t" style="top:463.90px;font-size:12px;color:#e4e4e4;letter-spacing:-0.250px;left:844px;transform:scaleX(0.9314);transform-origin:left center;">0.000821</span>
<div class="b" style="left:972.0px;top:461px;width:16px;height:7.3px;background:#8a8a8a;border-radius:2px;"></div>
<div class="b" style="left:972.0px;top:470.2px;width:16px;height:7px;background:#8a8a8a;border-radius:2px;"></div>
<svg class="b" style="left:972.0px;top:459px;" width="16" height="20" viewBox="0 0 16 20"><path d="M4 7.6L8 3.9L12 7.6M4 12.7L8 16.4L12 12.7" stroke="#4a4a4a" stroke-width="1.2" fill="none"/></svg>
</body></html>
